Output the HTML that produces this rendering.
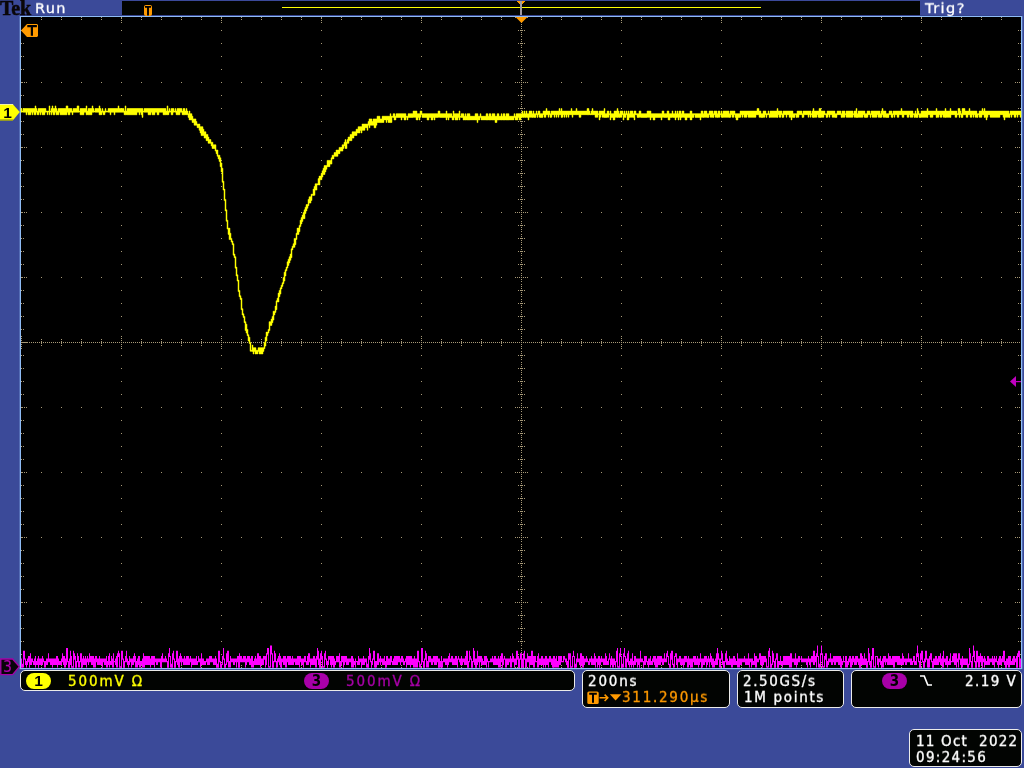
<!DOCTYPE html>
<html lang="en">
<head>
<meta charset="utf-8">
<title>Tek Run - Trig?</title>
<style>
  html, body { margin: 0; padding: 0; }
  body { width: 1024px; height: 768px; overflow: hidden; background: #3b4a99;
         font-family: "DejaVu Sans", "Liberation Sans", sans-serif; font-size: 15px; color: #fff; position: relative; }
  .abs { position: absolute; }
  .lbl, .pill, .tek, .dig { will-change: transform; }
  #scope { position: absolute; left: 0; top: 0; width: 1024px; height: 768px; }
  .tek { left: -0.5px; top: -3px; font-family: "Liberation Serif", "DejaVu Serif", serif;
          font-weight: bold; font-size: 20px; letter-spacing: -0.2px; color: #0a0608; line-height: 22px;
          -webkit-text-stroke: 0.5px #0a0608; transform: scaleX(1.0); transform-origin: 0 0; }
  .lbl { font-family: "DejaVu Sans Condensed", "DejaVu Sans", "Liberation Sans", sans-serif; line-height: 18px; white-space: pre; letter-spacing: 1.6px; -webkit-text-stroke: 0.35px currentColor; transform: scaleY(0.93); transform-origin: 0 14.2px; }
  .top { font-family: "DejaVu Sans", "Liberation Sans", sans-serif; font-size: 14.5px; -webkit-text-stroke: 0.3px currentColor; transform: scaleY(0.97); }
  .box { position: absolute; box-sizing: border-box; background: #020402; border: 1px solid #ececea;
          border-radius: 5px; }
  .pill { position: absolute; width: 25px; height: 16px; border-radius: 8px; color: #000;
           font-family: "DejaVu Sans Condensed", "DejaVu Sans", sans-serif; font-weight: bold;
           font-size: 15px; line-height: 16px; text-align: center; }
  .pill.one { font-family: "Liberation Sans", "DejaVu Sans", sans-serif; font-size: 15.5px; }
  .yel { color: #ffff00; }
  .dmag { color: #a800a8; }
  .org { color: #ff9a00; }
</style>
</head>
<body>
<svg id="scope" width="1024" height="768" viewBox="0 0 1024 768" shape-rendering="crispEdges">
  <!-- top record-view bar -->
  <rect x="122" y="1" width="798" height="15" fill="#020402"/>
  <rect x="282" y="6.5" width="479" height="1.6" fill="#ffff00"/>
  <rect x="520" y="1" width="2" height="15" fill="#a09aa2"/>
  <polygon points="517,1 525,1 523,4 522,4 522,1 520,1 520,4 519,4" fill="#ff9a00"/>
  <!-- graticule -->
  <rect x="19.7" y="16" width="1002.6" height="653.1" fill="#8fbcf5" shape-rendering="geometricPrecision"/>
  <rect x="21" y="17" width="1000" height="651" fill="#000"/>
  <rect x="20" y="15" width="1002" height="1" fill="#34428c"/>
  <path d="M21 30h1v1h-1zM21 43h1v1h-1zM21 56h1v1h-1zM21 69h1v1h-1zM21 82h1v1h-1zM21 95h1v1h-1zM21 108h1v1h-1zM21 121h1v1h-1zM21 134h1v1h-1zM21 147h1v1h-1zM21 160h1v1h-1zM21 173h1v1h-1zM21 186h1v1h-1zM21 199h1v1h-1zM21 212h1v1h-1zM21 225h1v1h-1zM21 238h1v1h-1zM21 251h1v1h-1zM21 264h1v1h-1zM21 277h1v1h-1zM21 290h1v1h-1zM21 303h1v1h-1zM21 316h1v1h-1zM21 329h1v1h-1zM21 336h1v1h-1zM21 338h1v1h-1zM21 340h1v1h-1zM21 342h1v1h-1zM21 344h1v1h-1zM21 346h1v1h-1zM21 348h1v1h-1zM21 355h1v1h-1zM21 368h1v1h-1zM21 381h1v1h-1zM21 394h1v1h-1zM21 407h1v1h-1zM21 420h1v1h-1zM21 433h1v1h-1zM21 446h1v1h-1zM21 459h1v1h-1zM21 472h1v1h-1zM21 485h1v1h-1zM21 498h1v1h-1zM21 511h1v1h-1zM21 524h1v1h-1zM21 537h1v1h-1zM21 550h1v1h-1zM21 563h1v1h-1zM21 576h1v1h-1zM21 589h1v1h-1zM21 602h1v1h-1zM21 615h1v1h-1zM21 628h1v1h-1zM21 641h1v1h-1zM21 654h1v1h-1zM22 82h1v1h-1zM22 147h1v1h-1zM22 212h1v1h-1zM22 277h1v1h-1zM22 342h1v1h-1zM22 407h1v1h-1zM22 472h1v1h-1zM22 537h1v1h-1zM22 602h1v1h-1zM23 30h1v1h-1zM23 43h1v1h-1zM23 56h1v1h-1zM23 69h1v1h-1zM23 95h1v1h-1zM23 108h1v1h-1zM23 121h1v1h-1zM23 134h1v1h-1zM23 160h1v1h-1zM23 173h1v1h-1zM23 186h1v1h-1zM23 199h1v1h-1zM23 225h1v1h-1zM23 238h1v1h-1zM23 251h1v1h-1zM23 264h1v1h-1zM23 290h1v1h-1zM23 303h1v1h-1zM23 316h1v1h-1zM23 329h1v1h-1zM23 342h1v1h-1zM23 355h1v1h-1zM23 368h1v1h-1zM23 381h1v1h-1zM23 394h1v1h-1zM23 420h1v1h-1zM23 433h1v1h-1zM23 446h1v1h-1zM23 459h1v1h-1zM23 485h1v1h-1zM23 498h1v1h-1zM23 511h1v1h-1zM23 524h1v1h-1zM23 550h1v1h-1zM23 563h1v1h-1zM23 576h1v1h-1zM23 589h1v1h-1zM23 615h1v1h-1zM23 628h1v1h-1zM23 641h1v1h-1zM23 654h1v1h-1zM24 82h1v1h-1zM24 147h1v1h-1zM24 212h1v1h-1zM24 277h1v1h-1zM24 342h1v1h-1zM24 407h1v1h-1zM24 472h1v1h-1zM24 537h1v1h-1zM24 602h1v1h-1zM25 342h1v1h-1zM26 82h1v1h-1zM26 147h1v1h-1zM26 212h1v1h-1zM26 277h1v1h-1zM26 342h1v1h-1zM26 407h1v1h-1zM26 472h1v1h-1zM26 537h1v1h-1zM26 602h1v1h-1zM27 342h1v1h-1zM29 342h1v1h-1zM31 342h1v1h-1zM33 342h1v1h-1zM35 342h1v1h-1zM37 342h1v1h-1zM39 342h1v1h-1zM41 17h1v1h-1zM41 19h1v1h-1zM41 82h1v1h-1zM41 147h1v1h-1zM41 212h1v1h-1zM41 277h1v1h-1zM41 339h1v1h-1zM41 341h1v1h-1zM41 342h1v1h-1zM41 343h1v1h-1zM41 345h1v1h-1zM41 407h1v1h-1zM41 472h1v1h-1zM41 537h1v1h-1zM41 602h1v1h-1zM41 665h1v1h-1zM41 667h1v1h-1zM43 342h1v1h-1zM45 342h1v1h-1zM47 342h1v1h-1zM49 342h1v1h-1zM51 342h1v1h-1zM53 342h1v1h-1zM55 342h1v1h-1zM57 342h1v1h-1zM59 342h1v1h-1zM61 17h1v1h-1zM61 19h1v1h-1zM61 82h1v1h-1zM61 147h1v1h-1zM61 212h1v1h-1zM61 277h1v1h-1zM61 339h1v1h-1zM61 341h1v1h-1zM61 342h1v1h-1zM61 343h1v1h-1zM61 345h1v1h-1zM61 407h1v1h-1zM61 472h1v1h-1zM61 537h1v1h-1zM61 602h1v1h-1zM61 665h1v1h-1zM61 667h1v1h-1zM63 342h1v1h-1zM65 342h1v1h-1zM67 342h1v1h-1zM69 342h1v1h-1zM71 342h1v1h-1zM73 342h1v1h-1zM75 342h1v1h-1zM77 342h1v1h-1zM79 342h1v1h-1zM81 17h1v1h-1zM81 19h1v1h-1zM81 82h1v1h-1zM81 147h1v1h-1zM81 212h1v1h-1zM81 277h1v1h-1zM81 339h1v1h-1zM81 341h1v1h-1zM81 342h1v1h-1zM81 343h1v1h-1zM81 345h1v1h-1zM81 407h1v1h-1zM81 472h1v1h-1zM81 537h1v1h-1zM81 602h1v1h-1zM81 665h1v1h-1zM81 667h1v1h-1zM83 342h1v1h-1zM85 342h1v1h-1zM87 342h1v1h-1zM89 342h1v1h-1zM91 342h1v1h-1zM93 342h1v1h-1zM95 342h1v1h-1zM97 342h1v1h-1zM99 342h1v1h-1zM101 17h1v1h-1zM101 19h1v1h-1zM101 82h1v1h-1zM101 147h1v1h-1zM101 212h1v1h-1zM101 277h1v1h-1zM101 339h1v1h-1zM101 341h1v1h-1zM101 342h1v1h-1zM101 343h1v1h-1zM101 345h1v1h-1zM101 407h1v1h-1zM101 472h1v1h-1zM101 537h1v1h-1zM101 602h1v1h-1zM101 665h1v1h-1zM101 667h1v1h-1zM103 342h1v1h-1zM105 342h1v1h-1zM107 342h1v1h-1zM109 342h1v1h-1zM111 342h1v1h-1zM113 342h1v1h-1zM115 342h1v1h-1zM117 342h1v1h-1zM119 342h1v1h-1zM121 17h1v1h-1zM121 18h1v1h-1zM121 20h1v1h-1zM121 22h1v1h-1zM121 30h1v1h-1zM121 43h1v1h-1zM121 56h1v1h-1zM121 69h1v1h-1zM121 82h1v1h-1zM121 95h1v1h-1zM121 108h1v1h-1zM121 121h1v1h-1zM121 134h1v1h-1zM121 147h1v1h-1zM121 160h1v1h-1zM121 173h1v1h-1zM121 186h1v1h-1zM121 199h1v1h-1zM121 212h1v1h-1zM121 225h1v1h-1zM121 238h1v1h-1zM121 251h1v1h-1zM121 264h1v1h-1zM121 277h1v1h-1zM121 290h1v1h-1zM121 303h1v1h-1zM121 316h1v1h-1zM121 329h1v1h-1zM121 336h1v1h-1zM121 338h1v1h-1zM121 340h1v1h-1zM121 342h1v1h-1zM121 344h1v1h-1zM121 346h1v1h-1zM121 348h1v1h-1zM121 355h1v1h-1zM121 368h1v1h-1zM121 381h1v1h-1zM121 394h1v1h-1zM121 407h1v1h-1zM121 420h1v1h-1zM121 433h1v1h-1zM121 446h1v1h-1zM121 459h1v1h-1zM121 472h1v1h-1zM121 485h1v1h-1zM121 498h1v1h-1zM121 511h1v1h-1zM121 524h1v1h-1zM121 537h1v1h-1zM121 550h1v1h-1zM121 563h1v1h-1zM121 576h1v1h-1zM121 589h1v1h-1zM121 602h1v1h-1zM121 615h1v1h-1zM121 628h1v1h-1zM121 641h1v1h-1zM121 654h1v1h-1zM121 662h1v1h-1zM121 664h1v1h-1zM121 666h1v1h-1zM121 667h1v1h-1zM123 342h1v1h-1zM125 342h1v1h-1zM127 342h1v1h-1zM129 342h1v1h-1zM131 342h1v1h-1zM133 342h1v1h-1zM135 342h1v1h-1zM137 342h1v1h-1zM139 342h1v1h-1zM141 17h1v1h-1zM141 19h1v1h-1zM141 82h1v1h-1zM141 147h1v1h-1zM141 212h1v1h-1zM141 277h1v1h-1zM141 339h1v1h-1zM141 341h1v1h-1zM141 342h1v1h-1zM141 343h1v1h-1zM141 345h1v1h-1zM141 407h1v1h-1zM141 472h1v1h-1zM141 537h1v1h-1zM141 602h1v1h-1zM141 665h1v1h-1zM141 667h1v1h-1zM143 342h1v1h-1zM145 342h1v1h-1zM147 342h1v1h-1zM149 342h1v1h-1zM151 342h1v1h-1zM153 342h1v1h-1zM155 342h1v1h-1zM157 342h1v1h-1zM159 342h1v1h-1zM161 17h1v1h-1zM161 19h1v1h-1zM161 82h1v1h-1zM161 147h1v1h-1zM161 212h1v1h-1zM161 277h1v1h-1zM161 339h1v1h-1zM161 341h1v1h-1zM161 342h1v1h-1zM161 343h1v1h-1zM161 345h1v1h-1zM161 407h1v1h-1zM161 472h1v1h-1zM161 537h1v1h-1zM161 602h1v1h-1zM161 665h1v1h-1zM161 667h1v1h-1zM163 342h1v1h-1zM165 342h1v1h-1zM167 342h1v1h-1zM169 342h1v1h-1zM171 342h1v1h-1zM173 342h1v1h-1zM175 342h1v1h-1zM177 342h1v1h-1zM179 342h1v1h-1zM181 17h1v1h-1zM181 19h1v1h-1zM181 82h1v1h-1zM181 147h1v1h-1zM181 212h1v1h-1zM181 277h1v1h-1zM181 339h1v1h-1zM181 341h1v1h-1zM181 342h1v1h-1zM181 343h1v1h-1zM181 345h1v1h-1zM181 407h1v1h-1zM181 472h1v1h-1zM181 537h1v1h-1zM181 602h1v1h-1zM181 665h1v1h-1zM181 667h1v1h-1zM183 342h1v1h-1zM185 342h1v1h-1zM187 342h1v1h-1zM189 342h1v1h-1zM191 342h1v1h-1zM193 342h1v1h-1zM195 342h1v1h-1zM197 342h1v1h-1zM199 342h1v1h-1zM201 17h1v1h-1zM201 19h1v1h-1zM201 82h1v1h-1zM201 147h1v1h-1zM201 212h1v1h-1zM201 277h1v1h-1zM201 339h1v1h-1zM201 341h1v1h-1zM201 342h1v1h-1zM201 343h1v1h-1zM201 345h1v1h-1zM201 407h1v1h-1zM201 472h1v1h-1zM201 537h1v1h-1zM201 602h1v1h-1zM201 665h1v1h-1zM201 667h1v1h-1zM203 342h1v1h-1zM205 342h1v1h-1zM207 342h1v1h-1zM209 342h1v1h-1zM211 342h1v1h-1zM213 342h1v1h-1zM215 342h1v1h-1zM217 342h1v1h-1zM219 342h1v1h-1zM221 17h1v1h-1zM221 18h1v1h-1zM221 20h1v1h-1zM221 22h1v1h-1zM221 30h1v1h-1zM221 43h1v1h-1zM221 56h1v1h-1zM221 69h1v1h-1zM221 82h1v1h-1zM221 95h1v1h-1zM221 108h1v1h-1zM221 121h1v1h-1zM221 134h1v1h-1zM221 147h1v1h-1zM221 160h1v1h-1zM221 173h1v1h-1zM221 186h1v1h-1zM221 199h1v1h-1zM221 212h1v1h-1zM221 225h1v1h-1zM221 238h1v1h-1zM221 251h1v1h-1zM221 264h1v1h-1zM221 277h1v1h-1zM221 290h1v1h-1zM221 303h1v1h-1zM221 316h1v1h-1zM221 329h1v1h-1zM221 336h1v1h-1zM221 338h1v1h-1zM221 340h1v1h-1zM221 342h1v1h-1zM221 344h1v1h-1zM221 346h1v1h-1zM221 348h1v1h-1zM221 355h1v1h-1zM221 368h1v1h-1zM221 381h1v1h-1zM221 394h1v1h-1zM221 407h1v1h-1zM221 420h1v1h-1zM221 433h1v1h-1zM221 446h1v1h-1zM221 459h1v1h-1zM221 472h1v1h-1zM221 485h1v1h-1zM221 498h1v1h-1zM221 511h1v1h-1zM221 524h1v1h-1zM221 537h1v1h-1zM221 550h1v1h-1zM221 563h1v1h-1zM221 576h1v1h-1zM221 589h1v1h-1zM221 602h1v1h-1zM221 615h1v1h-1zM221 628h1v1h-1zM221 641h1v1h-1zM221 654h1v1h-1zM221 662h1v1h-1zM221 664h1v1h-1zM221 666h1v1h-1zM221 667h1v1h-1zM223 342h1v1h-1zM225 342h1v1h-1zM227 342h1v1h-1zM229 342h1v1h-1zM231 342h1v1h-1zM233 342h1v1h-1zM235 342h1v1h-1zM237 342h1v1h-1zM239 342h1v1h-1zM241 17h1v1h-1zM241 19h1v1h-1zM241 82h1v1h-1zM241 147h1v1h-1zM241 212h1v1h-1zM241 277h1v1h-1zM241 339h1v1h-1zM241 341h1v1h-1zM241 342h1v1h-1zM241 343h1v1h-1zM241 345h1v1h-1zM241 407h1v1h-1zM241 472h1v1h-1zM241 537h1v1h-1zM241 602h1v1h-1zM241 665h1v1h-1zM241 667h1v1h-1zM243 342h1v1h-1zM245 342h1v1h-1zM247 342h1v1h-1zM249 342h1v1h-1zM251 342h1v1h-1zM253 342h1v1h-1zM255 342h1v1h-1zM257 342h1v1h-1zM259 342h1v1h-1zM261 17h1v1h-1zM261 19h1v1h-1zM261 82h1v1h-1zM261 147h1v1h-1zM261 212h1v1h-1zM261 277h1v1h-1zM261 339h1v1h-1zM261 341h1v1h-1zM261 342h1v1h-1zM261 343h1v1h-1zM261 345h1v1h-1zM261 407h1v1h-1zM261 472h1v1h-1zM261 537h1v1h-1zM261 602h1v1h-1zM261 665h1v1h-1zM261 667h1v1h-1zM263 342h1v1h-1zM265 342h1v1h-1zM267 342h1v1h-1zM269 342h1v1h-1zM271 342h1v1h-1zM273 342h1v1h-1zM275 342h1v1h-1zM277 342h1v1h-1zM279 342h1v1h-1zM281 17h1v1h-1zM281 19h1v1h-1zM281 82h1v1h-1zM281 147h1v1h-1zM281 212h1v1h-1zM281 277h1v1h-1zM281 339h1v1h-1zM281 341h1v1h-1zM281 342h1v1h-1zM281 343h1v1h-1zM281 345h1v1h-1zM281 407h1v1h-1zM281 472h1v1h-1zM281 537h1v1h-1zM281 602h1v1h-1zM281 665h1v1h-1zM281 667h1v1h-1zM283 342h1v1h-1zM285 342h1v1h-1zM287 342h1v1h-1zM289 342h1v1h-1zM291 342h1v1h-1zM293 342h1v1h-1zM295 342h1v1h-1zM297 342h1v1h-1zM299 342h1v1h-1zM301 17h1v1h-1zM301 19h1v1h-1zM301 82h1v1h-1zM301 147h1v1h-1zM301 212h1v1h-1zM301 277h1v1h-1zM301 339h1v1h-1zM301 341h1v1h-1zM301 342h1v1h-1zM301 343h1v1h-1zM301 345h1v1h-1zM301 407h1v1h-1zM301 472h1v1h-1zM301 537h1v1h-1zM301 602h1v1h-1zM301 665h1v1h-1zM301 667h1v1h-1zM303 342h1v1h-1zM305 342h1v1h-1zM307 342h1v1h-1zM309 342h1v1h-1zM311 342h1v1h-1zM313 342h1v1h-1zM315 342h1v1h-1zM317 342h1v1h-1zM319 342h1v1h-1zM321 17h1v1h-1zM321 18h1v1h-1zM321 20h1v1h-1zM321 22h1v1h-1zM321 30h1v1h-1zM321 43h1v1h-1zM321 56h1v1h-1zM321 69h1v1h-1zM321 82h1v1h-1zM321 95h1v1h-1zM321 108h1v1h-1zM321 121h1v1h-1zM321 134h1v1h-1zM321 147h1v1h-1zM321 160h1v1h-1zM321 173h1v1h-1zM321 186h1v1h-1zM321 199h1v1h-1zM321 212h1v1h-1zM321 225h1v1h-1zM321 238h1v1h-1zM321 251h1v1h-1zM321 264h1v1h-1zM321 277h1v1h-1zM321 290h1v1h-1zM321 303h1v1h-1zM321 316h1v1h-1zM321 329h1v1h-1zM321 336h1v1h-1zM321 338h1v1h-1zM321 340h1v1h-1zM321 342h1v1h-1zM321 344h1v1h-1zM321 346h1v1h-1zM321 348h1v1h-1zM321 355h1v1h-1zM321 368h1v1h-1zM321 381h1v1h-1zM321 394h1v1h-1zM321 407h1v1h-1zM321 420h1v1h-1zM321 433h1v1h-1zM321 446h1v1h-1zM321 459h1v1h-1zM321 472h1v1h-1zM321 485h1v1h-1zM321 498h1v1h-1zM321 511h1v1h-1zM321 524h1v1h-1zM321 537h1v1h-1zM321 550h1v1h-1zM321 563h1v1h-1zM321 576h1v1h-1zM321 589h1v1h-1zM321 602h1v1h-1zM321 615h1v1h-1zM321 628h1v1h-1zM321 641h1v1h-1zM321 654h1v1h-1zM321 662h1v1h-1zM321 664h1v1h-1zM321 666h1v1h-1zM321 667h1v1h-1zM323 342h1v1h-1zM325 342h1v1h-1zM327 342h1v1h-1zM329 342h1v1h-1zM331 342h1v1h-1zM333 342h1v1h-1zM335 342h1v1h-1zM337 342h1v1h-1zM339 342h1v1h-1zM341 17h1v1h-1zM341 19h1v1h-1zM341 82h1v1h-1zM341 147h1v1h-1zM341 212h1v1h-1zM341 277h1v1h-1zM341 339h1v1h-1zM341 341h1v1h-1zM341 342h1v1h-1zM341 343h1v1h-1zM341 345h1v1h-1zM341 407h1v1h-1zM341 472h1v1h-1zM341 537h1v1h-1zM341 602h1v1h-1zM341 665h1v1h-1zM341 667h1v1h-1zM343 342h1v1h-1zM345 342h1v1h-1zM347 342h1v1h-1zM349 342h1v1h-1zM351 342h1v1h-1zM353 342h1v1h-1zM355 342h1v1h-1zM357 342h1v1h-1zM359 342h1v1h-1zM361 17h1v1h-1zM361 19h1v1h-1zM361 82h1v1h-1zM361 147h1v1h-1zM361 212h1v1h-1zM361 277h1v1h-1zM361 339h1v1h-1zM361 341h1v1h-1zM361 342h1v1h-1zM361 343h1v1h-1zM361 345h1v1h-1zM361 407h1v1h-1zM361 472h1v1h-1zM361 537h1v1h-1zM361 602h1v1h-1zM361 665h1v1h-1zM361 667h1v1h-1zM363 342h1v1h-1zM365 342h1v1h-1zM367 342h1v1h-1zM369 342h1v1h-1zM371 342h1v1h-1zM373 342h1v1h-1zM375 342h1v1h-1zM377 342h1v1h-1zM379 342h1v1h-1zM381 17h1v1h-1zM381 19h1v1h-1zM381 82h1v1h-1zM381 147h1v1h-1zM381 212h1v1h-1zM381 277h1v1h-1zM381 339h1v1h-1zM381 341h1v1h-1zM381 342h1v1h-1zM381 343h1v1h-1zM381 345h1v1h-1zM381 407h1v1h-1zM381 472h1v1h-1zM381 537h1v1h-1zM381 602h1v1h-1zM381 665h1v1h-1zM381 667h1v1h-1zM383 342h1v1h-1zM385 342h1v1h-1zM387 342h1v1h-1zM389 342h1v1h-1zM391 342h1v1h-1zM393 342h1v1h-1zM395 342h1v1h-1zM397 342h1v1h-1zM399 342h1v1h-1zM401 17h1v1h-1zM401 19h1v1h-1zM401 82h1v1h-1zM401 147h1v1h-1zM401 212h1v1h-1zM401 277h1v1h-1zM401 339h1v1h-1zM401 341h1v1h-1zM401 342h1v1h-1zM401 343h1v1h-1zM401 345h1v1h-1zM401 407h1v1h-1zM401 472h1v1h-1zM401 537h1v1h-1zM401 602h1v1h-1zM401 665h1v1h-1zM401 667h1v1h-1zM403 342h1v1h-1zM405 342h1v1h-1zM407 342h1v1h-1zM409 342h1v1h-1zM411 342h1v1h-1zM413 342h1v1h-1zM415 342h1v1h-1zM417 342h1v1h-1zM419 342h1v1h-1zM421 17h1v1h-1zM421 18h1v1h-1zM421 20h1v1h-1zM421 22h1v1h-1zM421 30h1v1h-1zM421 43h1v1h-1zM421 56h1v1h-1zM421 69h1v1h-1zM421 82h1v1h-1zM421 95h1v1h-1zM421 108h1v1h-1zM421 121h1v1h-1zM421 134h1v1h-1zM421 147h1v1h-1zM421 160h1v1h-1zM421 173h1v1h-1zM421 186h1v1h-1zM421 199h1v1h-1zM421 212h1v1h-1zM421 225h1v1h-1zM421 238h1v1h-1zM421 251h1v1h-1zM421 264h1v1h-1zM421 277h1v1h-1zM421 290h1v1h-1zM421 303h1v1h-1zM421 316h1v1h-1zM421 329h1v1h-1zM421 336h1v1h-1zM421 338h1v1h-1zM421 340h1v1h-1zM421 342h1v1h-1zM421 344h1v1h-1zM421 346h1v1h-1zM421 348h1v1h-1zM421 355h1v1h-1zM421 368h1v1h-1zM421 381h1v1h-1zM421 394h1v1h-1zM421 407h1v1h-1zM421 420h1v1h-1zM421 433h1v1h-1zM421 446h1v1h-1zM421 459h1v1h-1zM421 472h1v1h-1zM421 485h1v1h-1zM421 498h1v1h-1zM421 511h1v1h-1zM421 524h1v1h-1zM421 537h1v1h-1zM421 550h1v1h-1zM421 563h1v1h-1zM421 576h1v1h-1zM421 589h1v1h-1zM421 602h1v1h-1zM421 615h1v1h-1zM421 628h1v1h-1zM421 641h1v1h-1zM421 654h1v1h-1zM421 662h1v1h-1zM421 664h1v1h-1zM421 666h1v1h-1zM421 667h1v1h-1zM423 342h1v1h-1zM425 342h1v1h-1zM427 342h1v1h-1zM429 342h1v1h-1zM431 342h1v1h-1zM433 342h1v1h-1zM435 342h1v1h-1zM437 342h1v1h-1zM439 342h1v1h-1zM441 17h1v1h-1zM441 19h1v1h-1zM441 82h1v1h-1zM441 147h1v1h-1zM441 212h1v1h-1zM441 277h1v1h-1zM441 339h1v1h-1zM441 341h1v1h-1zM441 342h1v1h-1zM441 343h1v1h-1zM441 345h1v1h-1zM441 407h1v1h-1zM441 472h1v1h-1zM441 537h1v1h-1zM441 602h1v1h-1zM441 665h1v1h-1zM441 667h1v1h-1zM443 342h1v1h-1zM445 342h1v1h-1zM447 342h1v1h-1zM449 342h1v1h-1zM451 342h1v1h-1zM453 342h1v1h-1zM455 342h1v1h-1zM457 342h1v1h-1zM459 342h1v1h-1zM461 17h1v1h-1zM461 19h1v1h-1zM461 82h1v1h-1zM461 147h1v1h-1zM461 212h1v1h-1zM461 277h1v1h-1zM461 339h1v1h-1zM461 341h1v1h-1zM461 342h1v1h-1zM461 343h1v1h-1zM461 345h1v1h-1zM461 407h1v1h-1zM461 472h1v1h-1zM461 537h1v1h-1zM461 602h1v1h-1zM461 665h1v1h-1zM461 667h1v1h-1zM463 342h1v1h-1zM465 342h1v1h-1zM467 342h1v1h-1zM469 342h1v1h-1zM471 342h1v1h-1zM473 342h1v1h-1zM475 342h1v1h-1zM477 342h1v1h-1zM479 342h1v1h-1zM481 17h1v1h-1zM481 19h1v1h-1zM481 82h1v1h-1zM481 147h1v1h-1zM481 212h1v1h-1zM481 277h1v1h-1zM481 339h1v1h-1zM481 341h1v1h-1zM481 342h1v1h-1zM481 343h1v1h-1zM481 345h1v1h-1zM481 407h1v1h-1zM481 472h1v1h-1zM481 537h1v1h-1zM481 602h1v1h-1zM481 665h1v1h-1zM481 667h1v1h-1zM483 342h1v1h-1zM485 342h1v1h-1zM487 342h1v1h-1zM489 342h1v1h-1zM491 342h1v1h-1zM493 342h1v1h-1zM495 342h1v1h-1zM497 342h1v1h-1zM499 342h1v1h-1zM501 17h1v1h-1zM501 19h1v1h-1zM501 82h1v1h-1zM501 147h1v1h-1zM501 212h1v1h-1zM501 277h1v1h-1zM501 339h1v1h-1zM501 341h1v1h-1zM501 342h1v1h-1zM501 343h1v1h-1zM501 345h1v1h-1zM501 407h1v1h-1zM501 472h1v1h-1zM501 537h1v1h-1zM501 602h1v1h-1zM501 665h1v1h-1zM501 667h1v1h-1zM503 342h1v1h-1zM505 342h1v1h-1zM507 342h1v1h-1zM509 342h1v1h-1zM511 342h1v1h-1zM513 342h1v1h-1zM515 17h1v1h-1zM515 82h1v1h-1zM515 147h1v1h-1zM515 212h1v1h-1zM515 277h1v1h-1zM515 342h1v1h-1zM515 407h1v1h-1zM515 472h1v1h-1zM515 537h1v1h-1zM515 602h1v1h-1zM515 667h1v1h-1zM517 17h1v1h-1zM517 82h1v1h-1zM517 147h1v1h-1zM517 212h1v1h-1zM517 277h1v1h-1zM517 342h1v1h-1zM517 407h1v1h-1zM517 472h1v1h-1zM517 537h1v1h-1zM517 602h1v1h-1zM517 667h1v1h-1zM518 30h1v1h-1zM518 43h1v1h-1zM518 56h1v1h-1zM518 69h1v1h-1zM518 95h1v1h-1zM518 108h1v1h-1zM518 121h1v1h-1zM518 134h1v1h-1zM518 160h1v1h-1zM518 173h1v1h-1zM518 186h1v1h-1zM518 199h1v1h-1zM518 225h1v1h-1zM518 238h1v1h-1zM518 251h1v1h-1zM518 264h1v1h-1zM518 290h1v1h-1zM518 303h1v1h-1zM518 316h1v1h-1zM518 329h1v1h-1zM518 355h1v1h-1zM518 368h1v1h-1zM518 381h1v1h-1zM518 394h1v1h-1zM518 420h1v1h-1zM518 433h1v1h-1zM518 446h1v1h-1zM518 459h1v1h-1zM518 485h1v1h-1zM518 498h1v1h-1zM518 511h1v1h-1zM518 524h1v1h-1zM518 550h1v1h-1zM518 563h1v1h-1zM518 576h1v1h-1zM518 589h1v1h-1zM518 615h1v1h-1zM518 628h1v1h-1zM518 641h1v1h-1zM518 654h1v1h-1zM519 17h1v1h-1zM519 82h1v1h-1zM519 147h1v1h-1zM519 212h1v1h-1zM519 277h1v1h-1zM519 342h1v1h-1zM519 407h1v1h-1zM519 472h1v1h-1zM519 537h1v1h-1zM519 602h1v1h-1zM519 667h1v1h-1zM520 30h1v1h-1zM520 43h1v1h-1zM520 56h1v1h-1zM520 69h1v1h-1zM520 95h1v1h-1zM520 108h1v1h-1zM520 121h1v1h-1zM520 134h1v1h-1zM520 160h1v1h-1zM520 173h1v1h-1zM520 186h1v1h-1zM520 199h1v1h-1zM520 225h1v1h-1zM520 238h1v1h-1zM520 251h1v1h-1zM520 264h1v1h-1zM520 290h1v1h-1zM520 303h1v1h-1zM520 316h1v1h-1zM520 329h1v1h-1zM520 355h1v1h-1zM520 368h1v1h-1zM520 381h1v1h-1zM520 394h1v1h-1zM520 420h1v1h-1zM520 433h1v1h-1zM520 446h1v1h-1zM520 459h1v1h-1zM520 485h1v1h-1zM520 498h1v1h-1zM520 511h1v1h-1zM520 524h1v1h-1zM520 550h1v1h-1zM520 563h1v1h-1zM520 576h1v1h-1zM520 589h1v1h-1zM520 615h1v1h-1zM520 628h1v1h-1zM520 641h1v1h-1zM520 654h1v1h-1zM521 17h1v1h-1zM521 18h1v1h-1zM521 19h1v1h-1zM521 20h1v1h-1zM521 21h1v1h-1zM521 22h1v1h-1zM521 24h1v1h-1zM521 26h1v1h-1zM521 28h1v1h-1zM521 30h1v1h-1zM521 32h1v1h-1zM521 34h1v1h-1zM521 36h1v1h-1zM521 39h1v1h-1zM521 41h1v1h-1zM521 43h1v1h-1zM521 45h1v1h-1zM521 47h1v1h-1zM521 50h1v1h-1zM521 52h1v1h-1zM521 54h1v1h-1zM521 56h1v1h-1zM521 58h1v1h-1zM521 60h1v1h-1zM521 62h1v1h-1zM521 65h1v1h-1zM521 67h1v1h-1zM521 69h1v1h-1zM521 71h1v1h-1zM521 73h1v1h-1zM521 76h1v1h-1zM521 78h1v1h-1zM521 80h1v1h-1zM521 82h1v1h-1zM521 84h1v1h-1zM521 86h1v1h-1zM521 88h1v1h-1zM521 91h1v1h-1zM521 93h1v1h-1zM521 95h1v1h-1zM521 97h1v1h-1zM521 99h1v1h-1zM521 102h1v1h-1zM521 104h1v1h-1zM521 106h1v1h-1zM521 108h1v1h-1zM521 110h1v1h-1zM521 112h1v1h-1zM521 114h1v1h-1zM521 117h1v1h-1zM521 119h1v1h-1zM521 121h1v1h-1zM521 123h1v1h-1zM521 125h1v1h-1zM521 127h1v1h-1zM521 130h1v1h-1zM521 132h1v1h-1zM521 134h1v1h-1zM521 136h1v1h-1zM521 138h1v1h-1zM521 140h1v1h-1zM521 143h1v1h-1zM521 145h1v1h-1zM521 147h1v1h-1zM521 149h1v1h-1zM521 151h1v1h-1zM521 154h1v1h-1zM521 156h1v1h-1zM521 158h1v1h-1zM521 160h1v1h-1zM521 162h1v1h-1zM521 164h1v1h-1zM521 166h1v1h-1zM521 169h1v1h-1zM521 171h1v1h-1zM521 173h1v1h-1zM521 175h1v1h-1zM521 177h1v1h-1zM521 180h1v1h-1zM521 182h1v1h-1zM521 184h1v1h-1zM521 186h1v1h-1zM521 188h1v1h-1zM521 190h1v1h-1zM521 192h1v1h-1zM521 195h1v1h-1zM521 197h1v1h-1zM521 199h1v1h-1zM521 201h1v1h-1zM521 203h1v1h-1zM521 206h1v1h-1zM521 208h1v1h-1zM521 210h1v1h-1zM521 212h1v1h-1zM521 214h1v1h-1zM521 216h1v1h-1zM521 218h1v1h-1zM521 221h1v1h-1zM521 223h1v1h-1zM521 225h1v1h-1zM521 227h1v1h-1zM521 229h1v1h-1zM521 231h1v1h-1zM521 234h1v1h-1zM521 236h1v1h-1zM521 238h1v1h-1zM521 240h1v1h-1zM521 242h1v1h-1zM521 244h1v1h-1zM521 247h1v1h-1zM521 249h1v1h-1zM521 251h1v1h-1zM521 253h1v1h-1zM521 255h1v1h-1zM521 258h1v1h-1zM521 260h1v1h-1zM521 262h1v1h-1zM521 264h1v1h-1zM521 266h1v1h-1zM521 268h1v1h-1zM521 270h1v1h-1zM521 273h1v1h-1zM521 275h1v1h-1zM521 277h1v1h-1zM521 279h1v1h-1zM521 281h1v1h-1zM521 284h1v1h-1zM521 286h1v1h-1zM521 288h1v1h-1zM521 290h1v1h-1zM521 292h1v1h-1zM521 294h1v1h-1zM521 296h1v1h-1zM521 299h1v1h-1zM521 301h1v1h-1zM521 303h1v1h-1zM521 305h1v1h-1zM521 307h1v1h-1zM521 310h1v1h-1zM521 312h1v1h-1zM521 314h1v1h-1zM521 316h1v1h-1zM521 318h1v1h-1zM521 320h1v1h-1zM521 322h1v1h-1zM521 325h1v1h-1zM521 327h1v1h-1zM521 329h1v1h-1zM521 331h1v1h-1zM521 333h1v1h-1zM521 336h1v1h-1zM521 338h1v1h-1zM521 340h1v1h-1zM521 342h1v1h-1zM521 344h1v1h-1zM521 346h1v1h-1zM521 348h1v1h-1zM521 351h1v1h-1zM521 353h1v1h-1zM521 355h1v1h-1zM521 357h1v1h-1zM521 359h1v1h-1zM521 362h1v1h-1zM521 364h1v1h-1zM521 366h1v1h-1zM521 368h1v1h-1zM521 370h1v1h-1zM521 372h1v1h-1zM521 374h1v1h-1zM521 377h1v1h-1zM521 379h1v1h-1zM521 381h1v1h-1zM521 383h1v1h-1zM521 385h1v1h-1zM521 388h1v1h-1zM521 390h1v1h-1zM521 392h1v1h-1zM521 394h1v1h-1zM521 396h1v1h-1zM521 398h1v1h-1zM521 400h1v1h-1zM521 403h1v1h-1zM521 405h1v1h-1zM521 407h1v1h-1zM521 409h1v1h-1zM521 411h1v1h-1zM521 414h1v1h-1zM521 416h1v1h-1zM521 418h1v1h-1zM521 420h1v1h-1zM521 422h1v1h-1zM521 424h1v1h-1zM521 426h1v1h-1zM521 429h1v1h-1zM521 431h1v1h-1zM521 433h1v1h-1zM521 435h1v1h-1zM521 437h1v1h-1zM521 439h1v1h-1zM521 442h1v1h-1zM521 444h1v1h-1zM521 446h1v1h-1zM521 448h1v1h-1zM521 450h1v1h-1zM521 452h1v1h-1zM521 455h1v1h-1zM521 457h1v1h-1zM521 459h1v1h-1zM521 461h1v1h-1zM521 463h1v1h-1zM521 465h1v1h-1zM521 468h1v1h-1zM521 470h1v1h-1zM521 472h1v1h-1zM521 474h1v1h-1zM521 476h1v1h-1zM521 478h1v1h-1zM521 481h1v1h-1zM521 483h1v1h-1zM521 485h1v1h-1zM521 487h1v1h-1zM521 489h1v1h-1zM521 491h1v1h-1zM521 494h1v1h-1zM521 496h1v1h-1zM521 498h1v1h-1zM521 500h1v1h-1zM521 502h1v1h-1zM521 504h1v1h-1zM521 507h1v1h-1zM521 509h1v1h-1zM521 511h1v1h-1zM521 513h1v1h-1zM521 515h1v1h-1zM521 518h1v1h-1zM521 520h1v1h-1zM521 522h1v1h-1zM521 524h1v1h-1zM521 526h1v1h-1zM521 528h1v1h-1zM521 530h1v1h-1zM521 533h1v1h-1zM521 535h1v1h-1zM521 537h1v1h-1zM521 539h1v1h-1zM521 541h1v1h-1zM521 544h1v1h-1zM521 546h1v1h-1zM521 548h1v1h-1zM521 550h1v1h-1zM521 552h1v1h-1zM521 554h1v1h-1zM521 556h1v1h-1zM521 559h1v1h-1zM521 561h1v1h-1zM521 563h1v1h-1zM521 565h1v1h-1zM521 567h1v1h-1zM521 570h1v1h-1zM521 572h1v1h-1zM521 574h1v1h-1zM521 576h1v1h-1zM521 578h1v1h-1zM521 580h1v1h-1zM521 582h1v1h-1zM521 585h1v1h-1zM521 587h1v1h-1zM521 589h1v1h-1zM521 591h1v1h-1zM521 593h1v1h-1zM521 596h1v1h-1zM521 598h1v1h-1zM521 600h1v1h-1zM521 602h1v1h-1zM521 604h1v1h-1zM521 606h1v1h-1zM521 608h1v1h-1zM521 611h1v1h-1zM521 613h1v1h-1zM521 615h1v1h-1zM521 617h1v1h-1zM521 619h1v1h-1zM521 622h1v1h-1zM521 624h1v1h-1zM521 626h1v1h-1zM521 628h1v1h-1zM521 630h1v1h-1zM521 632h1v1h-1zM521 634h1v1h-1zM521 637h1v1h-1zM521 639h1v1h-1zM521 641h1v1h-1zM521 643h1v1h-1zM521 645h1v1h-1zM521 648h1v1h-1zM521 650h1v1h-1zM521 652h1v1h-1zM521 654h1v1h-1zM521 656h1v1h-1zM521 658h1v1h-1zM521 660h1v1h-1zM521 662h1v1h-1zM521 663h1v1h-1zM521 664h1v1h-1zM521 665h1v1h-1zM521 666h1v1h-1zM521 667h1v1h-1zM522 30h1v1h-1zM522 43h1v1h-1zM522 56h1v1h-1zM522 69h1v1h-1zM522 95h1v1h-1zM522 108h1v1h-1zM522 121h1v1h-1zM522 134h1v1h-1zM522 160h1v1h-1zM522 173h1v1h-1zM522 186h1v1h-1zM522 199h1v1h-1zM522 225h1v1h-1zM522 238h1v1h-1zM522 251h1v1h-1zM522 264h1v1h-1zM522 290h1v1h-1zM522 303h1v1h-1zM522 316h1v1h-1zM522 329h1v1h-1zM522 355h1v1h-1zM522 368h1v1h-1zM522 381h1v1h-1zM522 394h1v1h-1zM522 420h1v1h-1zM522 433h1v1h-1zM522 446h1v1h-1zM522 459h1v1h-1zM522 485h1v1h-1zM522 498h1v1h-1zM522 511h1v1h-1zM522 524h1v1h-1zM522 550h1v1h-1zM522 563h1v1h-1zM522 576h1v1h-1zM522 589h1v1h-1zM522 615h1v1h-1zM522 628h1v1h-1zM522 641h1v1h-1zM522 654h1v1h-1zM523 17h1v1h-1zM523 82h1v1h-1zM523 147h1v1h-1zM523 212h1v1h-1zM523 277h1v1h-1zM523 342h1v1h-1zM523 407h1v1h-1zM523 472h1v1h-1zM523 537h1v1h-1zM523 602h1v1h-1zM523 667h1v1h-1zM524 30h1v1h-1zM524 43h1v1h-1zM524 56h1v1h-1zM524 69h1v1h-1zM524 95h1v1h-1zM524 108h1v1h-1zM524 121h1v1h-1zM524 134h1v1h-1zM524 160h1v1h-1zM524 173h1v1h-1zM524 186h1v1h-1zM524 199h1v1h-1zM524 225h1v1h-1zM524 238h1v1h-1zM524 251h1v1h-1zM524 264h1v1h-1zM524 290h1v1h-1zM524 303h1v1h-1zM524 316h1v1h-1zM524 329h1v1h-1zM524 355h1v1h-1zM524 368h1v1h-1zM524 381h1v1h-1zM524 394h1v1h-1zM524 420h1v1h-1zM524 433h1v1h-1zM524 446h1v1h-1zM524 459h1v1h-1zM524 485h1v1h-1zM524 498h1v1h-1zM524 511h1v1h-1zM524 524h1v1h-1zM524 550h1v1h-1zM524 563h1v1h-1zM524 576h1v1h-1zM524 589h1v1h-1zM524 615h1v1h-1zM524 628h1v1h-1zM524 641h1v1h-1zM524 654h1v1h-1zM525 17h1v1h-1zM525 82h1v1h-1zM525 147h1v1h-1zM525 212h1v1h-1zM525 277h1v1h-1zM525 342h1v1h-1zM525 407h1v1h-1zM525 472h1v1h-1zM525 537h1v1h-1zM525 602h1v1h-1zM525 667h1v1h-1zM527 17h1v1h-1zM527 82h1v1h-1zM527 147h1v1h-1zM527 212h1v1h-1zM527 277h1v1h-1zM527 342h1v1h-1zM527 407h1v1h-1zM527 472h1v1h-1zM527 537h1v1h-1zM527 602h1v1h-1zM527 667h1v1h-1zM529 342h1v1h-1zM531 342h1v1h-1zM533 342h1v1h-1zM535 342h1v1h-1zM537 342h1v1h-1zM539 342h1v1h-1zM541 17h1v1h-1zM541 19h1v1h-1zM541 82h1v1h-1zM541 147h1v1h-1zM541 212h1v1h-1zM541 277h1v1h-1zM541 339h1v1h-1zM541 341h1v1h-1zM541 342h1v1h-1zM541 343h1v1h-1zM541 345h1v1h-1zM541 407h1v1h-1zM541 472h1v1h-1zM541 537h1v1h-1zM541 602h1v1h-1zM541 665h1v1h-1zM541 667h1v1h-1zM543 342h1v1h-1zM545 342h1v1h-1zM547 342h1v1h-1zM549 342h1v1h-1zM551 342h1v1h-1zM553 342h1v1h-1zM555 342h1v1h-1zM557 342h1v1h-1zM559 342h1v1h-1zM561 17h1v1h-1zM561 19h1v1h-1zM561 82h1v1h-1zM561 147h1v1h-1zM561 212h1v1h-1zM561 277h1v1h-1zM561 339h1v1h-1zM561 341h1v1h-1zM561 342h1v1h-1zM561 343h1v1h-1zM561 345h1v1h-1zM561 407h1v1h-1zM561 472h1v1h-1zM561 537h1v1h-1zM561 602h1v1h-1zM561 665h1v1h-1zM561 667h1v1h-1zM563 342h1v1h-1zM565 342h1v1h-1zM567 342h1v1h-1zM569 342h1v1h-1zM571 342h1v1h-1zM573 342h1v1h-1zM575 342h1v1h-1zM577 342h1v1h-1zM579 342h1v1h-1zM581 17h1v1h-1zM581 19h1v1h-1zM581 82h1v1h-1zM581 147h1v1h-1zM581 212h1v1h-1zM581 277h1v1h-1zM581 339h1v1h-1zM581 341h1v1h-1zM581 342h1v1h-1zM581 343h1v1h-1zM581 345h1v1h-1zM581 407h1v1h-1zM581 472h1v1h-1zM581 537h1v1h-1zM581 602h1v1h-1zM581 665h1v1h-1zM581 667h1v1h-1zM583 342h1v1h-1zM585 342h1v1h-1zM587 342h1v1h-1zM589 342h1v1h-1zM591 342h1v1h-1zM593 342h1v1h-1zM595 342h1v1h-1zM597 342h1v1h-1zM599 342h1v1h-1zM601 17h1v1h-1zM601 19h1v1h-1zM601 82h1v1h-1zM601 147h1v1h-1zM601 212h1v1h-1zM601 277h1v1h-1zM601 339h1v1h-1zM601 341h1v1h-1zM601 342h1v1h-1zM601 343h1v1h-1zM601 345h1v1h-1zM601 407h1v1h-1zM601 472h1v1h-1zM601 537h1v1h-1zM601 602h1v1h-1zM601 665h1v1h-1zM601 667h1v1h-1zM603 342h1v1h-1zM605 342h1v1h-1zM607 342h1v1h-1zM609 342h1v1h-1zM611 342h1v1h-1zM613 342h1v1h-1zM615 342h1v1h-1zM617 342h1v1h-1zM619 342h1v1h-1zM621 17h1v1h-1zM621 18h1v1h-1zM621 20h1v1h-1zM621 22h1v1h-1zM621 30h1v1h-1zM621 43h1v1h-1zM621 56h1v1h-1zM621 69h1v1h-1zM621 82h1v1h-1zM621 95h1v1h-1zM621 108h1v1h-1zM621 121h1v1h-1zM621 134h1v1h-1zM621 147h1v1h-1zM621 160h1v1h-1zM621 173h1v1h-1zM621 186h1v1h-1zM621 199h1v1h-1zM621 212h1v1h-1zM621 225h1v1h-1zM621 238h1v1h-1zM621 251h1v1h-1zM621 264h1v1h-1zM621 277h1v1h-1zM621 290h1v1h-1zM621 303h1v1h-1zM621 316h1v1h-1zM621 329h1v1h-1zM621 336h1v1h-1zM621 338h1v1h-1zM621 340h1v1h-1zM621 342h1v1h-1zM621 344h1v1h-1zM621 346h1v1h-1zM621 348h1v1h-1zM621 355h1v1h-1zM621 368h1v1h-1zM621 381h1v1h-1zM621 394h1v1h-1zM621 407h1v1h-1zM621 420h1v1h-1zM621 433h1v1h-1zM621 446h1v1h-1zM621 459h1v1h-1zM621 472h1v1h-1zM621 485h1v1h-1zM621 498h1v1h-1zM621 511h1v1h-1zM621 524h1v1h-1zM621 537h1v1h-1zM621 550h1v1h-1zM621 563h1v1h-1zM621 576h1v1h-1zM621 589h1v1h-1zM621 602h1v1h-1zM621 615h1v1h-1zM621 628h1v1h-1zM621 641h1v1h-1zM621 654h1v1h-1zM621 662h1v1h-1zM621 664h1v1h-1zM621 666h1v1h-1zM621 667h1v1h-1zM623 342h1v1h-1zM625 342h1v1h-1zM627 342h1v1h-1zM629 342h1v1h-1zM631 342h1v1h-1zM633 342h1v1h-1zM635 342h1v1h-1zM637 342h1v1h-1zM639 342h1v1h-1zM641 17h1v1h-1zM641 19h1v1h-1zM641 82h1v1h-1zM641 147h1v1h-1zM641 212h1v1h-1zM641 277h1v1h-1zM641 339h1v1h-1zM641 341h1v1h-1zM641 342h1v1h-1zM641 343h1v1h-1zM641 345h1v1h-1zM641 407h1v1h-1zM641 472h1v1h-1zM641 537h1v1h-1zM641 602h1v1h-1zM641 665h1v1h-1zM641 667h1v1h-1zM643 342h1v1h-1zM645 342h1v1h-1zM647 342h1v1h-1zM649 342h1v1h-1zM651 342h1v1h-1zM653 342h1v1h-1zM655 342h1v1h-1zM657 342h1v1h-1zM659 342h1v1h-1zM661 17h1v1h-1zM661 19h1v1h-1zM661 82h1v1h-1zM661 147h1v1h-1zM661 212h1v1h-1zM661 277h1v1h-1zM661 339h1v1h-1zM661 341h1v1h-1zM661 342h1v1h-1zM661 343h1v1h-1zM661 345h1v1h-1zM661 407h1v1h-1zM661 472h1v1h-1zM661 537h1v1h-1zM661 602h1v1h-1zM661 665h1v1h-1zM661 667h1v1h-1zM663 342h1v1h-1zM665 342h1v1h-1zM667 342h1v1h-1zM669 342h1v1h-1zM671 342h1v1h-1zM673 342h1v1h-1zM675 342h1v1h-1zM677 342h1v1h-1zM679 342h1v1h-1zM681 17h1v1h-1zM681 19h1v1h-1zM681 82h1v1h-1zM681 147h1v1h-1zM681 212h1v1h-1zM681 277h1v1h-1zM681 339h1v1h-1zM681 341h1v1h-1zM681 342h1v1h-1zM681 343h1v1h-1zM681 345h1v1h-1zM681 407h1v1h-1zM681 472h1v1h-1zM681 537h1v1h-1zM681 602h1v1h-1zM681 665h1v1h-1zM681 667h1v1h-1zM683 342h1v1h-1zM685 342h1v1h-1zM687 342h1v1h-1zM689 342h1v1h-1zM691 342h1v1h-1zM693 342h1v1h-1zM695 342h1v1h-1zM697 342h1v1h-1zM699 342h1v1h-1zM701 17h1v1h-1zM701 19h1v1h-1zM701 82h1v1h-1zM701 147h1v1h-1zM701 212h1v1h-1zM701 277h1v1h-1zM701 339h1v1h-1zM701 341h1v1h-1zM701 342h1v1h-1zM701 343h1v1h-1zM701 345h1v1h-1zM701 407h1v1h-1zM701 472h1v1h-1zM701 537h1v1h-1zM701 602h1v1h-1zM701 665h1v1h-1zM701 667h1v1h-1zM703 342h1v1h-1zM705 342h1v1h-1zM707 342h1v1h-1zM709 342h1v1h-1zM711 342h1v1h-1zM713 342h1v1h-1zM715 342h1v1h-1zM717 342h1v1h-1zM719 342h1v1h-1zM721 17h1v1h-1zM721 18h1v1h-1zM721 20h1v1h-1zM721 22h1v1h-1zM721 30h1v1h-1zM721 43h1v1h-1zM721 56h1v1h-1zM721 69h1v1h-1zM721 82h1v1h-1zM721 95h1v1h-1zM721 108h1v1h-1zM721 121h1v1h-1zM721 134h1v1h-1zM721 147h1v1h-1zM721 160h1v1h-1zM721 173h1v1h-1zM721 186h1v1h-1zM721 199h1v1h-1zM721 212h1v1h-1zM721 225h1v1h-1zM721 238h1v1h-1zM721 251h1v1h-1zM721 264h1v1h-1zM721 277h1v1h-1zM721 290h1v1h-1zM721 303h1v1h-1zM721 316h1v1h-1zM721 329h1v1h-1zM721 336h1v1h-1zM721 338h1v1h-1zM721 340h1v1h-1zM721 342h1v1h-1zM721 344h1v1h-1zM721 346h1v1h-1zM721 348h1v1h-1zM721 355h1v1h-1zM721 368h1v1h-1zM721 381h1v1h-1zM721 394h1v1h-1zM721 407h1v1h-1zM721 420h1v1h-1zM721 433h1v1h-1zM721 446h1v1h-1zM721 459h1v1h-1zM721 472h1v1h-1zM721 485h1v1h-1zM721 498h1v1h-1zM721 511h1v1h-1zM721 524h1v1h-1zM721 537h1v1h-1zM721 550h1v1h-1zM721 563h1v1h-1zM721 576h1v1h-1zM721 589h1v1h-1zM721 602h1v1h-1zM721 615h1v1h-1zM721 628h1v1h-1zM721 641h1v1h-1zM721 654h1v1h-1zM721 662h1v1h-1zM721 664h1v1h-1zM721 666h1v1h-1zM721 667h1v1h-1zM723 342h1v1h-1zM725 342h1v1h-1zM727 342h1v1h-1zM729 342h1v1h-1zM731 342h1v1h-1zM733 342h1v1h-1zM735 342h1v1h-1zM737 342h1v1h-1zM739 342h1v1h-1zM741 17h1v1h-1zM741 19h1v1h-1zM741 82h1v1h-1zM741 147h1v1h-1zM741 212h1v1h-1zM741 277h1v1h-1zM741 339h1v1h-1zM741 341h1v1h-1zM741 342h1v1h-1zM741 343h1v1h-1zM741 345h1v1h-1zM741 407h1v1h-1zM741 472h1v1h-1zM741 537h1v1h-1zM741 602h1v1h-1zM741 665h1v1h-1zM741 667h1v1h-1zM743 342h1v1h-1zM745 342h1v1h-1zM747 342h1v1h-1zM749 342h1v1h-1zM751 342h1v1h-1zM753 342h1v1h-1zM755 342h1v1h-1zM757 342h1v1h-1zM759 342h1v1h-1zM761 17h1v1h-1zM761 19h1v1h-1zM761 82h1v1h-1zM761 147h1v1h-1zM761 212h1v1h-1zM761 277h1v1h-1zM761 339h1v1h-1zM761 341h1v1h-1zM761 342h1v1h-1zM761 343h1v1h-1zM761 345h1v1h-1zM761 407h1v1h-1zM761 472h1v1h-1zM761 537h1v1h-1zM761 602h1v1h-1zM761 665h1v1h-1zM761 667h1v1h-1zM763 342h1v1h-1zM765 342h1v1h-1zM767 342h1v1h-1zM769 342h1v1h-1zM771 342h1v1h-1zM773 342h1v1h-1zM775 342h1v1h-1zM777 342h1v1h-1zM779 342h1v1h-1zM781 17h1v1h-1zM781 19h1v1h-1zM781 82h1v1h-1zM781 147h1v1h-1zM781 212h1v1h-1zM781 277h1v1h-1zM781 339h1v1h-1zM781 341h1v1h-1zM781 342h1v1h-1zM781 343h1v1h-1zM781 345h1v1h-1zM781 407h1v1h-1zM781 472h1v1h-1zM781 537h1v1h-1zM781 602h1v1h-1zM781 665h1v1h-1zM781 667h1v1h-1zM783 342h1v1h-1zM785 342h1v1h-1zM787 342h1v1h-1zM789 342h1v1h-1zM791 342h1v1h-1zM793 342h1v1h-1zM795 342h1v1h-1zM797 342h1v1h-1zM799 342h1v1h-1zM801 17h1v1h-1zM801 19h1v1h-1zM801 82h1v1h-1zM801 147h1v1h-1zM801 212h1v1h-1zM801 277h1v1h-1zM801 339h1v1h-1zM801 341h1v1h-1zM801 342h1v1h-1zM801 343h1v1h-1zM801 345h1v1h-1zM801 407h1v1h-1zM801 472h1v1h-1zM801 537h1v1h-1zM801 602h1v1h-1zM801 665h1v1h-1zM801 667h1v1h-1zM803 342h1v1h-1zM805 342h1v1h-1zM807 342h1v1h-1zM809 342h1v1h-1zM811 342h1v1h-1zM813 342h1v1h-1zM815 342h1v1h-1zM817 342h1v1h-1zM819 342h1v1h-1zM821 17h1v1h-1zM821 18h1v1h-1zM821 20h1v1h-1zM821 22h1v1h-1zM821 30h1v1h-1zM821 43h1v1h-1zM821 56h1v1h-1zM821 69h1v1h-1zM821 82h1v1h-1zM821 95h1v1h-1zM821 108h1v1h-1zM821 121h1v1h-1zM821 134h1v1h-1zM821 147h1v1h-1zM821 160h1v1h-1zM821 173h1v1h-1zM821 186h1v1h-1zM821 199h1v1h-1zM821 212h1v1h-1zM821 225h1v1h-1zM821 238h1v1h-1zM821 251h1v1h-1zM821 264h1v1h-1zM821 277h1v1h-1zM821 290h1v1h-1zM821 303h1v1h-1zM821 316h1v1h-1zM821 329h1v1h-1zM821 336h1v1h-1zM821 338h1v1h-1zM821 340h1v1h-1zM821 342h1v1h-1zM821 344h1v1h-1zM821 346h1v1h-1zM821 348h1v1h-1zM821 355h1v1h-1zM821 368h1v1h-1zM821 381h1v1h-1zM821 394h1v1h-1zM821 407h1v1h-1zM821 420h1v1h-1zM821 433h1v1h-1zM821 446h1v1h-1zM821 459h1v1h-1zM821 472h1v1h-1zM821 485h1v1h-1zM821 498h1v1h-1zM821 511h1v1h-1zM821 524h1v1h-1zM821 537h1v1h-1zM821 550h1v1h-1zM821 563h1v1h-1zM821 576h1v1h-1zM821 589h1v1h-1zM821 602h1v1h-1zM821 615h1v1h-1zM821 628h1v1h-1zM821 641h1v1h-1zM821 654h1v1h-1zM821 662h1v1h-1zM821 664h1v1h-1zM821 666h1v1h-1zM821 667h1v1h-1zM823 342h1v1h-1zM825 342h1v1h-1zM827 342h1v1h-1zM829 342h1v1h-1zM831 342h1v1h-1zM833 342h1v1h-1zM835 342h1v1h-1zM837 342h1v1h-1zM839 342h1v1h-1zM841 17h1v1h-1zM841 19h1v1h-1zM841 82h1v1h-1zM841 147h1v1h-1zM841 212h1v1h-1zM841 277h1v1h-1zM841 339h1v1h-1zM841 341h1v1h-1zM841 342h1v1h-1zM841 343h1v1h-1zM841 345h1v1h-1zM841 407h1v1h-1zM841 472h1v1h-1zM841 537h1v1h-1zM841 602h1v1h-1zM841 665h1v1h-1zM841 667h1v1h-1zM843 342h1v1h-1zM845 342h1v1h-1zM847 342h1v1h-1zM849 342h1v1h-1zM851 342h1v1h-1zM853 342h1v1h-1zM855 342h1v1h-1zM857 342h1v1h-1zM859 342h1v1h-1zM861 17h1v1h-1zM861 19h1v1h-1zM861 82h1v1h-1zM861 147h1v1h-1zM861 212h1v1h-1zM861 277h1v1h-1zM861 339h1v1h-1zM861 341h1v1h-1zM861 342h1v1h-1zM861 343h1v1h-1zM861 345h1v1h-1zM861 407h1v1h-1zM861 472h1v1h-1zM861 537h1v1h-1zM861 602h1v1h-1zM861 665h1v1h-1zM861 667h1v1h-1zM863 342h1v1h-1zM865 342h1v1h-1zM867 342h1v1h-1zM869 342h1v1h-1zM871 342h1v1h-1zM873 342h1v1h-1zM875 342h1v1h-1zM877 342h1v1h-1zM879 342h1v1h-1zM881 17h1v1h-1zM881 19h1v1h-1zM881 82h1v1h-1zM881 147h1v1h-1zM881 212h1v1h-1zM881 277h1v1h-1zM881 339h1v1h-1zM881 341h1v1h-1zM881 342h1v1h-1zM881 343h1v1h-1zM881 345h1v1h-1zM881 407h1v1h-1zM881 472h1v1h-1zM881 537h1v1h-1zM881 602h1v1h-1zM881 665h1v1h-1zM881 667h1v1h-1zM883 342h1v1h-1zM885 342h1v1h-1zM887 342h1v1h-1zM889 342h1v1h-1zM891 342h1v1h-1zM893 342h1v1h-1zM895 342h1v1h-1zM897 342h1v1h-1zM899 342h1v1h-1zM901 17h1v1h-1zM901 19h1v1h-1zM901 82h1v1h-1zM901 147h1v1h-1zM901 212h1v1h-1zM901 277h1v1h-1zM901 339h1v1h-1zM901 341h1v1h-1zM901 342h1v1h-1zM901 343h1v1h-1zM901 345h1v1h-1zM901 407h1v1h-1zM901 472h1v1h-1zM901 537h1v1h-1zM901 602h1v1h-1zM901 665h1v1h-1zM901 667h1v1h-1zM903 342h1v1h-1zM905 342h1v1h-1zM907 342h1v1h-1zM909 342h1v1h-1zM911 342h1v1h-1zM913 342h1v1h-1zM915 342h1v1h-1zM917 342h1v1h-1zM919 342h1v1h-1zM921 17h1v1h-1zM921 18h1v1h-1zM921 20h1v1h-1zM921 22h1v1h-1zM921 30h1v1h-1zM921 43h1v1h-1zM921 56h1v1h-1zM921 69h1v1h-1zM921 82h1v1h-1zM921 95h1v1h-1zM921 108h1v1h-1zM921 121h1v1h-1zM921 134h1v1h-1zM921 147h1v1h-1zM921 160h1v1h-1zM921 173h1v1h-1zM921 186h1v1h-1zM921 199h1v1h-1zM921 212h1v1h-1zM921 225h1v1h-1zM921 238h1v1h-1zM921 251h1v1h-1zM921 264h1v1h-1zM921 277h1v1h-1zM921 290h1v1h-1zM921 303h1v1h-1zM921 316h1v1h-1zM921 329h1v1h-1zM921 336h1v1h-1zM921 338h1v1h-1zM921 340h1v1h-1zM921 342h1v1h-1zM921 344h1v1h-1zM921 346h1v1h-1zM921 348h1v1h-1zM921 355h1v1h-1zM921 368h1v1h-1zM921 381h1v1h-1zM921 394h1v1h-1zM921 407h1v1h-1zM921 420h1v1h-1zM921 433h1v1h-1zM921 446h1v1h-1zM921 459h1v1h-1zM921 472h1v1h-1zM921 485h1v1h-1zM921 498h1v1h-1zM921 511h1v1h-1zM921 524h1v1h-1zM921 537h1v1h-1zM921 550h1v1h-1zM921 563h1v1h-1zM921 576h1v1h-1zM921 589h1v1h-1zM921 602h1v1h-1zM921 615h1v1h-1zM921 628h1v1h-1zM921 641h1v1h-1zM921 654h1v1h-1zM921 662h1v1h-1zM921 664h1v1h-1zM921 666h1v1h-1zM921 667h1v1h-1zM923 342h1v1h-1zM925 342h1v1h-1zM927 342h1v1h-1zM929 342h1v1h-1zM931 342h1v1h-1zM933 342h1v1h-1zM935 342h1v1h-1zM937 342h1v1h-1zM939 342h1v1h-1zM941 17h1v1h-1zM941 19h1v1h-1zM941 82h1v1h-1zM941 147h1v1h-1zM941 212h1v1h-1zM941 277h1v1h-1zM941 339h1v1h-1zM941 341h1v1h-1zM941 342h1v1h-1zM941 343h1v1h-1zM941 345h1v1h-1zM941 407h1v1h-1zM941 472h1v1h-1zM941 537h1v1h-1zM941 602h1v1h-1zM941 665h1v1h-1zM941 667h1v1h-1zM943 342h1v1h-1zM945 342h1v1h-1zM947 342h1v1h-1zM949 342h1v1h-1zM951 342h1v1h-1zM953 342h1v1h-1zM955 342h1v1h-1zM957 342h1v1h-1zM959 342h1v1h-1zM961 17h1v1h-1zM961 19h1v1h-1zM961 82h1v1h-1zM961 147h1v1h-1zM961 212h1v1h-1zM961 277h1v1h-1zM961 339h1v1h-1zM961 341h1v1h-1zM961 342h1v1h-1zM961 343h1v1h-1zM961 345h1v1h-1zM961 407h1v1h-1zM961 472h1v1h-1zM961 537h1v1h-1zM961 602h1v1h-1zM961 665h1v1h-1zM961 667h1v1h-1zM963 342h1v1h-1zM965 342h1v1h-1zM967 342h1v1h-1zM969 342h1v1h-1zM971 342h1v1h-1zM973 342h1v1h-1zM975 342h1v1h-1zM977 342h1v1h-1zM979 342h1v1h-1zM981 17h1v1h-1zM981 19h1v1h-1zM981 82h1v1h-1zM981 147h1v1h-1zM981 212h1v1h-1zM981 277h1v1h-1zM981 339h1v1h-1zM981 341h1v1h-1zM981 342h1v1h-1zM981 343h1v1h-1zM981 345h1v1h-1zM981 407h1v1h-1zM981 472h1v1h-1zM981 537h1v1h-1zM981 602h1v1h-1zM981 665h1v1h-1zM981 667h1v1h-1zM983 342h1v1h-1zM985 342h1v1h-1zM987 342h1v1h-1zM989 342h1v1h-1zM991 342h1v1h-1zM993 342h1v1h-1zM995 342h1v1h-1zM997 342h1v1h-1zM999 342h1v1h-1zM1001 17h1v1h-1zM1001 19h1v1h-1zM1001 82h1v1h-1zM1001 147h1v1h-1zM1001 212h1v1h-1zM1001 277h1v1h-1zM1001 339h1v1h-1zM1001 341h1v1h-1zM1001 342h1v1h-1zM1001 343h1v1h-1zM1001 345h1v1h-1zM1001 407h1v1h-1zM1001 472h1v1h-1zM1001 537h1v1h-1zM1001 602h1v1h-1zM1001 665h1v1h-1zM1001 667h1v1h-1zM1003 342h1v1h-1zM1005 342h1v1h-1zM1007 342h1v1h-1zM1009 342h1v1h-1zM1011 342h1v1h-1zM1013 342h1v1h-1zM1015 82h1v1h-1zM1015 147h1v1h-1zM1015 212h1v1h-1zM1015 277h1v1h-1zM1015 342h1v1h-1zM1015 407h1v1h-1zM1015 472h1v1h-1zM1015 537h1v1h-1zM1015 602h1v1h-1zM1017 82h1v1h-1zM1017 147h1v1h-1zM1017 212h1v1h-1zM1017 277h1v1h-1zM1017 342h1v1h-1zM1017 407h1v1h-1zM1017 472h1v1h-1zM1017 537h1v1h-1zM1017 602h1v1h-1zM1018 30h1v1h-1zM1018 43h1v1h-1zM1018 56h1v1h-1zM1018 69h1v1h-1zM1018 95h1v1h-1zM1018 108h1v1h-1zM1018 121h1v1h-1zM1018 134h1v1h-1zM1018 160h1v1h-1zM1018 173h1v1h-1zM1018 186h1v1h-1zM1018 199h1v1h-1zM1018 225h1v1h-1zM1018 238h1v1h-1zM1018 251h1v1h-1zM1018 264h1v1h-1zM1018 290h1v1h-1zM1018 303h1v1h-1zM1018 316h1v1h-1zM1018 329h1v1h-1zM1018 355h1v1h-1zM1018 368h1v1h-1zM1018 381h1v1h-1zM1018 394h1v1h-1zM1018 420h1v1h-1zM1018 433h1v1h-1zM1018 446h1v1h-1zM1018 459h1v1h-1zM1018 485h1v1h-1zM1018 498h1v1h-1zM1018 511h1v1h-1zM1018 524h1v1h-1zM1018 550h1v1h-1zM1018 563h1v1h-1zM1018 576h1v1h-1zM1018 589h1v1h-1zM1018 615h1v1h-1zM1018 628h1v1h-1zM1018 641h1v1h-1zM1018 654h1v1h-1zM1019 82h1v1h-1zM1019 147h1v1h-1zM1019 212h1v1h-1zM1019 277h1v1h-1zM1019 342h1v1h-1zM1019 407h1v1h-1zM1019 472h1v1h-1zM1019 537h1v1h-1zM1019 602h1v1h-1zM1020 30h1v1h-1zM1020 43h1v1h-1zM1020 56h1v1h-1zM1020 69h1v1h-1zM1020 95h1v1h-1zM1020 108h1v1h-1zM1020 121h1v1h-1zM1020 134h1v1h-1zM1020 160h1v1h-1zM1020 173h1v1h-1zM1020 186h1v1h-1zM1020 199h1v1h-1zM1020 225h1v1h-1zM1020 238h1v1h-1zM1020 251h1v1h-1zM1020 264h1v1h-1zM1020 290h1v1h-1zM1020 303h1v1h-1zM1020 316h1v1h-1zM1020 329h1v1h-1zM1020 355h1v1h-1zM1020 368h1v1h-1zM1020 381h1v1h-1zM1020 394h1v1h-1zM1020 420h1v1h-1zM1020 433h1v1h-1zM1020 446h1v1h-1zM1020 459h1v1h-1zM1020 485h1v1h-1zM1020 498h1v1h-1zM1020 511h1v1h-1zM1020 524h1v1h-1zM1020 550h1v1h-1zM1020 563h1v1h-1zM1020 576h1v1h-1zM1020 589h1v1h-1zM1020 615h1v1h-1zM1020 628h1v1h-1zM1020 641h1v1h-1zM1020 654h1v1h-1z" fill="#a89a78"/>
  <!-- trigger position marker -->
  <polygon points="515.5,17 527.5,17 521.5,23" fill="#ff9a00" shape-rendering="geometricPrecision"/>
  <!-- waveforms -->
  <path id="ch3" d="M21 658.5h1v9.3h-1zM22 663.7h1v4.1h-1zM23 650.7h1v16.8h-1zM24 650.7h1v9.0h-1zM25 658.5h1v6.4h-1zM26 661.1h1v6.4h-1zM27 658.5h1v6.4h-1zM28 655.9h1v6.4h-1zM29 655.9h1v11.9h-1zM30 653.3h1v11.6h-1zM31 658.5h1v6.4h-1zM32 658.5h1v3.8h-1zM33 661.1h1v3.8h-1zM34 658.5h1v6.4h-1zM35 655.9h1v11.6h-1zM36 661.1h1v3.8h-1zM37 658.5h1v6.4h-1zM38 655.9h1v11.9h-1zM39 658.5h1v6.4h-1zM40 658.5h1v6.4h-1zM41 658.5h1v6.4h-1zM42 655.9h1v9.0h-1zM43 658.5h1v3.8h-1zM44 661.1h1v6.4h-1zM45 661.1h1v6.4h-1zM46 658.5h1v6.4h-1zM47 658.5h1v6.4h-1zM48 653.3h1v9.0h-1zM49 658.5h1v3.8h-1zM50 658.5h1v6.4h-1zM51 658.5h1v6.4h-1zM52 658.5h1v9.0h-1zM53 658.5h1v6.4h-1zM54 658.5h1v6.4h-1zM55 658.5h1v6.4h-1zM56 655.9h1v9.0h-1zM57 655.9h1v11.6h-1zM58 658.5h1v6.4h-1zM59 661.1h1v3.8h-1zM60 661.1h1v3.8h-1zM61 658.5h1v6.4h-1zM62 653.3h1v9.0h-1zM63 655.9h1v9.0h-1zM64 655.9h1v11.6h-1zM65 658.5h1v9.0h-1zM66 648.1h1v16.8h-1zM67 648.1h1v14.2h-1zM68 661.1h1v6.7h-1zM69 658.5h1v9.3h-1zM70 650.7h1v14.2h-1zM71 655.9h1v11.9h-1zM72 666.3h1v1.5h-1zM73 650.7h1v17.1h-1zM74 653.3h1v6.4h-1zM75 655.9h1v11.9h-1zM76 661.1h1v6.7h-1zM77 653.3h1v9.0h-1zM78 655.9h1v11.6h-1zM79 661.1h1v6.4h-1zM80 653.3h1v9.0h-1zM81 653.3h1v14.2h-1zM82 658.5h1v9.0h-1zM83 655.9h1v9.0h-1zM84 658.5h1v6.4h-1zM85 655.9h1v9.0h-1zM86 658.5h1v9.0h-1zM87 655.9h1v6.4h-1zM88 658.5h1v6.4h-1zM89 653.3h1v9.0h-1zM90 655.9h1v6.4h-1zM91 655.9h1v9.0h-1zM92 655.9h1v9.0h-1zM93 655.9h1v11.6h-1zM94 658.5h1v9.0h-1zM95 655.9h1v11.6h-1zM96 655.9h1v6.4h-1zM97 658.5h1v6.4h-1zM98 658.5h1v6.4h-1zM99 655.9h1v9.0h-1zM100 658.5h1v6.4h-1zM101 658.5h1v6.4h-1zM102 658.5h1v9.0h-1zM103 658.5h1v3.8h-1zM104 658.5h1v6.4h-1zM105 658.5h1v6.4h-1zM106 655.9h1v11.6h-1zM107 661.1h1v6.4h-1zM108 655.9h1v9.0h-1zM109 653.3h1v14.2h-1zM110 661.1h1v3.8h-1zM111 655.9h1v9.0h-1zM112 658.5h1v9.0h-1zM113 653.3h1v14.2h-1zM114 661.1h1v1.2h-1zM115 658.5h1v6.4h-1zM116 655.9h1v11.6h-1zM117 653.3h1v14.2h-1zM118 650.7h1v6.4h-1zM119 653.3h1v14.5h-1zM120 666.3h1v1.5h-1zM121 650.7h1v16.8h-1zM122 650.7h1v9.0h-1zM123 658.5h1v9.3h-1zM124 661.1h1v6.7h-1zM125 655.9h1v6.4h-1zM126 650.7h1v11.6h-1zM127 658.5h1v6.4h-1zM128 661.1h1v6.4h-1zM129 655.9h1v9.0h-1zM130 658.5h1v3.8h-1zM131 658.5h1v9.0h-1zM132 658.5h1v6.4h-1zM133 655.9h1v9.0h-1zM134 653.3h1v9.0h-1zM135 655.9h1v11.6h-1zM136 661.1h1v6.4h-1zM137 658.5h1v9.0h-1zM138 655.9h1v9.0h-1zM139 655.9h1v11.6h-1zM140 661.1h1v6.4h-1zM141 661.1h1v3.8h-1zM142 658.5h1v9.0h-1zM143 653.3h1v14.2h-1zM144 655.9h1v11.6h-1zM145 655.9h1v9.0h-1zM146 655.9h1v9.0h-1zM147 655.9h1v9.0h-1zM148 655.9h1v9.0h-1zM149 655.9h1v9.0h-1zM150 658.5h1v9.0h-1zM151 655.9h1v9.0h-1zM152 655.9h1v9.0h-1zM153 655.9h1v9.0h-1zM154 655.9h1v11.6h-1zM155 658.5h1v3.8h-1zM156 658.5h1v6.4h-1zM157 658.5h1v6.4h-1zM158 658.5h1v3.8h-1zM159 658.5h1v3.8h-1zM160 658.5h1v9.0h-1zM161 655.9h1v11.6h-1zM162 653.3h1v9.0h-1zM163 658.5h1v3.8h-1zM164 658.5h1v3.8h-1zM165 655.9h1v6.4h-1zM166 658.5h1v3.8h-1zM167 661.1h1v6.7h-1zM168 653.3h1v14.5h-1zM169 648.1h1v9.0h-1zM170 655.9h1v11.6h-1zM171 663.7h1v4.1h-1zM172 653.3h1v14.5h-1zM173 650.7h1v9.0h-1zM174 658.5h1v9.3h-1zM175 661.1h1v6.7h-1zM176 650.7h1v11.6h-1zM177 650.7h1v14.2h-1zM178 658.5h1v9.0h-1zM179 655.9h1v11.9h-1zM180 653.3h1v9.0h-1zM181 655.9h1v9.0h-1zM182 658.5h1v3.8h-1zM183 658.5h1v6.4h-1zM184 655.9h1v9.0h-1zM185 658.5h1v6.4h-1zM186 655.9h1v9.0h-1zM187 655.9h1v9.0h-1zM188 655.9h1v9.0h-1zM189 658.5h1v6.4h-1zM190 655.9h1v6.4h-1zM191 658.5h1v9.0h-1zM192 658.5h1v6.4h-1zM193 658.5h1v6.4h-1zM194 658.5h1v6.4h-1zM195 658.5h1v6.4h-1zM196 655.9h1v9.0h-1zM197 661.1h1v3.8h-1zM198 655.9h1v6.4h-1zM199 658.5h1v3.8h-1zM200 658.5h1v9.0h-1zM201 653.3h1v11.6h-1zM202 658.5h1v6.4h-1zM203 658.5h1v6.4h-1zM204 661.1h1v3.8h-1zM205 661.1h1v3.8h-1zM206 658.5h1v3.8h-1zM207 658.5h1v6.4h-1zM208 658.5h1v6.4h-1zM209 655.9h1v9.0h-1zM210 655.9h1v6.4h-1zM211 655.9h1v6.4h-1zM212 658.5h1v3.8h-1zM213 658.5h1v6.4h-1zM214 658.5h1v6.4h-1zM215 655.9h1v9.0h-1zM216 658.5h1v9.3h-1zM217 663.7h1v4.1h-1zM218 650.7h1v17.1h-1zM219 650.7h1v11.6h-1zM220 661.1h1v6.7h-1zM221 663.7h1v4.1h-1zM222 655.9h1v9.0h-1zM223 648.1h1v11.6h-1zM224 658.5h1v9.3h-1zM225 663.7h1v4.1h-1zM226 653.3h1v11.6h-1zM227 650.7h1v11.6h-1zM228 650.7h1v16.8h-1zM229 661.1h1v6.4h-1zM230 655.9h1v11.6h-1zM231 658.5h1v3.8h-1zM232 658.5h1v3.8h-1zM233 658.5h1v6.4h-1zM234 658.5h1v6.4h-1zM235 658.5h1v3.8h-1zM236 658.5h1v9.0h-1zM237 655.9h1v6.4h-1zM238 655.9h1v11.9h-1zM239 653.3h1v14.5h-1zM240 655.9h1v6.4h-1zM241 655.9h1v6.4h-1zM242 658.5h1v3.8h-1zM243 655.9h1v6.4h-1zM244 655.9h1v6.4h-1zM245 655.9h1v11.6h-1zM246 658.5h1v6.4h-1zM247 655.9h1v6.4h-1zM248 655.9h1v6.4h-1zM249 655.9h1v9.0h-1zM250 658.5h1v6.4h-1zM251 655.9h1v11.6h-1zM252 655.9h1v11.6h-1zM253 661.1h1v6.4h-1zM254 658.5h1v6.4h-1zM255 655.9h1v9.0h-1zM256 658.5h1v6.4h-1zM257 653.3h1v11.6h-1zM258 653.3h1v11.6h-1zM259 655.9h1v9.0h-1zM260 655.9h1v11.6h-1zM261 658.5h1v6.4h-1zM262 658.5h1v6.4h-1zM263 655.9h1v9.0h-1zM264 655.9h1v3.8h-1zM265 655.9h1v11.6h-1zM266 653.3h1v11.6h-1zM267 648.1h1v6.4h-1zM268 648.1h1v19.4h-1zM269 666.3h1v1.5h-1zM270 645.5h1v22.0h-1zM271 645.5h1v9.0h-1zM272 653.3h1v14.5h-1zM273 661.1h1v6.7h-1zM274 650.7h1v11.6h-1zM275 653.3h1v9.0h-1zM276 661.1h1v6.7h-1zM277 658.5h1v9.0h-1zM278 655.9h1v6.4h-1zM279 653.3h1v11.6h-1zM280 655.9h1v11.6h-1zM281 658.5h1v9.0h-1zM282 658.5h1v3.8h-1zM283 655.9h1v9.0h-1zM284 655.9h1v9.0h-1zM285 655.9h1v11.6h-1zM286 658.5h1v9.0h-1zM287 655.9h1v6.4h-1zM288 655.9h1v9.0h-1zM289 655.9h1v9.0h-1zM290 655.9h1v9.0h-1zM291 658.5h1v6.4h-1zM292 655.9h1v9.0h-1zM293 658.5h1v6.4h-1zM294 658.5h1v3.8h-1zM295 658.5h1v6.4h-1zM296 658.5h1v6.4h-1zM297 655.9h1v9.0h-1zM298 655.9h1v9.0h-1zM299 655.9h1v11.6h-1zM300 655.9h1v6.4h-1zM301 658.5h1v6.4h-1zM302 658.5h1v6.4h-1zM303 658.5h1v9.0h-1zM304 655.9h1v6.4h-1zM305 655.9h1v6.4h-1zM306 661.1h1v3.8h-1zM307 655.9h1v9.0h-1zM308 653.3h1v11.6h-1zM309 653.3h1v9.0h-1zM310 658.5h1v9.0h-1zM311 658.5h1v6.4h-1zM312 658.5h1v6.4h-1zM313 655.9h1v9.0h-1zM314 655.9h1v9.0h-1zM315 658.5h1v9.0h-1zM316 655.9h1v11.6h-1zM317 648.1h1v11.6h-1zM318 650.7h1v14.2h-1zM319 658.5h1v9.3h-1zM320 653.3h1v14.5h-1zM321 650.7h1v9.0h-1zM322 655.9h1v11.9h-1zM323 666.3h1v1.5h-1zM324 653.3h1v14.2h-1zM325 650.7h1v9.0h-1zM326 658.5h1v6.4h-1zM327 661.1h1v6.7h-1zM328 655.9h1v9.0h-1zM329 655.9h1v3.8h-1zM330 655.9h1v9.0h-1zM331 655.9h1v11.6h-1zM332 655.9h1v9.0h-1zM333 655.9h1v11.6h-1zM334 658.5h1v9.0h-1zM335 661.1h1v3.8h-1zM336 655.9h1v6.4h-1zM337 655.9h1v6.4h-1zM338 655.9h1v6.4h-1zM339 653.3h1v14.2h-1zM340 661.1h1v6.4h-1zM341 655.9h1v9.0h-1zM342 655.9h1v6.4h-1zM343 655.9h1v11.6h-1zM344 655.9h1v9.0h-1zM345 655.9h1v6.4h-1zM346 655.9h1v9.0h-1zM347 658.5h1v6.4h-1zM348 658.5h1v6.4h-1zM349 658.5h1v3.8h-1zM350 658.5h1v3.8h-1zM351 655.9h1v11.6h-1zM352 655.9h1v11.6h-1zM353 658.5h1v9.0h-1zM354 661.1h1v3.8h-1zM355 658.5h1v9.0h-1zM356 661.1h1v1.2h-1zM357 661.1h1v3.8h-1zM358 655.9h1v9.0h-1zM359 658.5h1v6.4h-1zM360 658.5h1v3.8h-1zM361 658.5h1v9.0h-1zM362 658.5h1v6.4h-1zM363 655.9h1v9.0h-1zM364 658.5h1v6.4h-1zM365 658.5h1v3.8h-1zM366 658.5h1v9.0h-1zM367 663.7h1v4.1h-1zM368 655.9h1v11.9h-1zM369 648.1h1v11.6h-1zM370 653.3h1v9.0h-1zM371 661.1h1v6.7h-1zM372 658.5h1v6.4h-1zM373 650.7h1v9.0h-1zM374 650.7h1v16.8h-1zM375 661.1h1v6.7h-1zM376 661.1h1v6.4h-1zM377 653.3h1v11.6h-1zM378 653.3h1v11.6h-1zM379 658.5h1v3.8h-1zM380 655.9h1v9.0h-1zM381 658.5h1v3.8h-1zM382 658.5h1v6.4h-1zM383 658.5h1v6.4h-1zM384 655.9h1v9.0h-1zM385 661.1h1v6.7h-1zM386 655.9h1v11.6h-1zM387 655.9h1v9.0h-1zM388 658.5h1v6.4h-1zM389 658.5h1v6.4h-1zM390 655.9h1v9.0h-1zM391 655.9h1v6.4h-1zM392 661.1h1v3.8h-1zM393 658.5h1v6.4h-1zM394 655.9h1v9.0h-1zM395 655.9h1v9.0h-1zM396 655.9h1v9.0h-1zM397 655.9h1v9.0h-1zM398 655.9h1v6.4h-1zM399 655.9h1v6.4h-1zM400 658.5h1v6.4h-1zM401 655.9h1v6.4h-1zM402 655.9h1v6.4h-1zM403 658.5h1v6.4h-1zM404 661.1h1v3.8h-1zM405 658.5h1v3.8h-1zM406 655.9h1v11.6h-1zM407 655.9h1v9.0h-1zM408 655.9h1v9.0h-1zM409 655.9h1v9.0h-1zM410 655.9h1v11.6h-1zM411 655.9h1v9.0h-1zM412 658.5h1v6.4h-1zM413 658.5h1v9.0h-1zM414 655.9h1v11.6h-1zM415 658.5h1v9.0h-1zM416 658.5h1v9.0h-1zM417 650.7h1v16.8h-1zM418 650.7h1v11.6h-1zM419 661.1h1v6.4h-1zM420 663.7h1v4.1h-1zM421 648.1h1v16.8h-1zM422 648.1h1v14.2h-1zM423 661.1h1v6.7h-1zM424 658.5h1v9.3h-1zM425 650.7h1v9.0h-1zM426 653.3h1v14.2h-1zM427 661.1h1v6.4h-1zM428 655.9h1v11.6h-1zM429 655.9h1v6.4h-1zM430 655.9h1v6.4h-1zM431 658.5h1v6.4h-1zM432 658.5h1v6.4h-1zM433 655.9h1v6.4h-1zM434 655.9h1v9.0h-1zM435 655.9h1v9.0h-1zM436 655.9h1v9.0h-1zM437 655.9h1v6.4h-1zM438 658.5h1v9.3h-1zM439 658.5h1v9.3h-1zM440 661.1h1v6.4h-1zM441 655.9h1v11.6h-1zM442 661.1h1v6.4h-1zM443 658.5h1v3.8h-1zM444 658.5h1v3.8h-1zM445 658.5h1v6.4h-1zM446 658.5h1v6.4h-1zM447 658.5h1v9.0h-1zM448 655.9h1v9.0h-1zM449 653.3h1v9.0h-1zM450 658.5h1v3.8h-1zM451 655.9h1v6.4h-1zM452 655.9h1v9.0h-1zM453 658.5h1v6.4h-1zM454 658.5h1v6.4h-1zM455 655.9h1v9.0h-1zM456 655.9h1v9.0h-1zM457 658.5h1v9.0h-1zM458 655.9h1v3.8h-1zM459 658.5h1v3.8h-1zM460 658.5h1v6.4h-1zM461 655.9h1v9.0h-1zM462 658.5h1v6.4h-1zM463 658.5h1v3.8h-1zM464 658.5h1v6.4h-1zM465 655.9h1v9.0h-1zM466 650.7h1v14.2h-1zM467 650.7h1v17.1h-1zM468 661.1h1v6.7h-1zM469 650.7h1v11.6h-1zM470 655.9h1v3.8h-1zM471 658.5h1v9.3h-1zM472 661.1h1v6.7h-1zM473 648.1h1v14.2h-1zM474 650.7h1v14.2h-1zM475 658.5h1v9.3h-1zM476 658.5h1v9.3h-1zM477 650.7h1v14.2h-1zM478 655.9h1v6.4h-1zM479 655.9h1v11.9h-1zM480 655.9h1v6.4h-1zM481 655.9h1v9.0h-1zM482 658.5h1v6.4h-1zM483 661.1h1v3.8h-1zM484 655.9h1v9.0h-1zM485 655.9h1v9.0h-1zM486 655.9h1v11.6h-1zM487 658.5h1v3.8h-1zM488 661.1h1v6.4h-1zM489 661.1h1v1.2h-1zM490 658.5h1v3.8h-1zM491 658.5h1v3.8h-1zM492 655.9h1v6.4h-1zM493 658.5h1v6.4h-1zM494 655.9h1v9.0h-1zM495 655.9h1v9.0h-1zM496 658.5h1v6.4h-1zM497 658.5h1v6.4h-1zM498 655.9h1v11.6h-1zM499 658.5h1v9.0h-1zM500 655.9h1v11.6h-1zM501 653.3h1v9.0h-1zM502 653.3h1v14.5h-1zM503 658.5h1v6.4h-1zM504 655.9h1v3.8h-1zM505 658.5h1v9.0h-1zM506 658.5h1v9.0h-1zM507 658.5h1v6.4h-1zM508 658.5h1v6.4h-1zM509 658.5h1v3.8h-1zM510 655.9h1v11.6h-1zM511 658.5h1v9.0h-1zM512 653.3h1v9.0h-1zM513 655.9h1v6.4h-1zM514 658.5h1v9.0h-1zM515 658.5h1v6.4h-1zM516 650.7h1v14.2h-1zM517 650.7h1v9.0h-1zM518 655.9h1v11.9h-1zM519 658.5h1v9.0h-1zM520 653.3h1v6.4h-1zM521 653.3h1v14.2h-1zM522 658.5h1v9.3h-1zM523 653.3h1v14.2h-1zM524 650.7h1v9.0h-1zM525 658.5h1v9.0h-1zM526 658.5h1v9.0h-1zM527 653.3h1v9.0h-1zM528 655.9h1v6.4h-1zM529 655.9h1v11.9h-1zM530 655.9h1v9.0h-1zM531 650.7h1v14.2h-1zM532 650.7h1v14.2h-1zM533 655.9h1v11.6h-1zM534 655.9h1v11.6h-1zM535 655.9h1v6.4h-1zM536 661.1h1v1.2h-1zM537 655.9h1v11.6h-1zM538 653.3h1v14.2h-1zM539 658.5h1v6.4h-1zM540 658.5h1v6.4h-1zM541 655.9h1v9.0h-1zM542 655.9h1v9.0h-1zM543 658.5h1v9.0h-1zM544 658.5h1v6.4h-1zM545 655.9h1v11.6h-1zM546 655.9h1v9.0h-1zM547 658.5h1v6.4h-1zM548 658.5h1v9.0h-1zM549 655.9h1v6.4h-1zM550 655.9h1v6.4h-1zM551 658.5h1v6.4h-1zM552 658.5h1v9.0h-1zM553 655.9h1v11.9h-1zM554 655.9h1v11.6h-1zM555 658.5h1v9.0h-1zM556 655.9h1v11.6h-1zM557 661.1h1v6.4h-1zM558 655.9h1v11.6h-1zM559 655.9h1v9.0h-1zM560 655.9h1v9.0h-1zM561 655.9h1v6.4h-1zM562 661.1h1v1.2h-1zM563 655.9h1v6.4h-1zM564 655.9h1v3.8h-1zM565 658.5h1v3.8h-1zM566 658.5h1v6.4h-1zM567 661.1h1v6.7h-1zM568 653.3h1v14.5h-1zM569 653.3h1v6.4h-1zM570 653.3h1v14.5h-1zM571 666.3h1v1.5h-1zM572 655.9h1v11.6h-1zM573 650.7h1v6.4h-1zM574 655.9h1v11.9h-1zM575 663.7h1v4.1h-1zM576 658.5h1v9.0h-1zM577 653.3h1v9.0h-1zM578 658.5h1v3.8h-1zM579 658.5h1v6.4h-1zM580 653.3h1v14.2h-1zM581 653.3h1v11.6h-1zM582 655.9h1v11.6h-1zM583 655.9h1v11.6h-1zM584 658.5h1v6.4h-1zM585 658.5h1v3.8h-1zM586 655.9h1v6.4h-1zM587 658.5h1v3.8h-1zM588 661.1h1v3.8h-1zM589 658.5h1v6.4h-1zM590 658.5h1v3.8h-1zM591 655.9h1v9.0h-1zM592 658.5h1v6.4h-1zM593 658.5h1v6.4h-1zM594 653.3h1v11.6h-1zM595 655.9h1v11.6h-1zM596 658.5h1v3.8h-1zM597 658.5h1v9.0h-1zM598 655.9h1v9.0h-1zM599 655.9h1v11.9h-1zM600 658.5h1v6.4h-1zM601 655.9h1v6.4h-1zM602 658.5h1v3.8h-1zM603 658.5h1v6.4h-1zM604 658.5h1v6.4h-1zM605 653.3h1v11.6h-1zM606 655.9h1v9.0h-1zM607 661.1h1v3.8h-1zM608 658.5h1v6.4h-1zM609 653.3h1v6.4h-1zM610 658.5h1v9.0h-1zM611 655.9h1v9.0h-1zM612 658.5h1v9.0h-1zM613 658.5h1v9.0h-1zM614 658.5h1v6.4h-1zM615 661.1h1v6.4h-1zM616 650.7h1v11.6h-1zM617 648.1h1v19.4h-1zM618 666.3h1v1.5h-1zM619 653.3h1v14.5h-1zM620 648.1h1v9.0h-1zM621 655.9h1v11.6h-1zM622 663.7h1v4.1h-1zM623 653.3h1v14.2h-1zM624 648.1h1v9.0h-1zM625 655.9h1v11.6h-1zM626 658.5h1v9.3h-1zM627 653.3h1v9.0h-1zM628 650.7h1v14.2h-1zM629 661.1h1v6.4h-1zM630 658.5h1v6.4h-1zM631 658.5h1v9.0h-1zM632 653.3h1v11.6h-1zM633 661.1h1v6.4h-1zM634 655.9h1v9.0h-1zM635 655.9h1v9.0h-1zM636 658.5h1v3.8h-1zM637 658.5h1v9.0h-1zM638 658.5h1v6.4h-1zM639 658.5h1v9.3h-1zM640 650.7h1v11.6h-1zM641 658.5h1v3.8h-1zM642 658.5h1v3.8h-1zM643 661.1h1v6.7h-1zM644 655.9h1v9.0h-1zM645 655.9h1v9.0h-1zM646 655.9h1v6.4h-1zM647 661.1h1v3.8h-1zM648 658.5h1v9.0h-1zM649 658.5h1v6.4h-1zM650 655.9h1v9.0h-1zM651 661.1h1v3.8h-1zM652 658.5h1v6.4h-1zM653 655.9h1v6.4h-1zM654 655.9h1v9.0h-1zM655 655.9h1v11.6h-1zM656 658.5h1v9.0h-1zM657 655.9h1v11.6h-1zM658 655.9h1v9.0h-1zM659 655.9h1v9.0h-1zM660 655.9h1v9.0h-1zM661 655.9h1v6.4h-1zM662 658.5h1v6.4h-1zM663 658.5h1v6.4h-1zM664 653.3h1v9.0h-1zM665 658.5h1v3.8h-1zM666 653.3h1v9.0h-1zM667 650.7h1v6.4h-1zM668 655.9h1v9.0h-1zM669 663.7h1v4.1h-1zM670 653.3h1v14.5h-1zM671 650.7h1v9.0h-1zM672 650.7h1v14.2h-1zM673 663.7h1v4.1h-1zM674 655.9h1v11.6h-1zM675 653.3h1v3.8h-1zM676 653.3h1v11.6h-1zM677 658.5h1v9.3h-1zM678 658.5h1v3.8h-1zM679 655.9h1v6.4h-1zM680 655.9h1v9.0h-1zM681 658.5h1v6.4h-1zM682 658.5h1v6.4h-1zM683 658.5h1v9.0h-1zM684 655.9h1v9.0h-1zM685 655.9h1v6.4h-1zM686 655.9h1v6.4h-1zM687 658.5h1v9.0h-1zM688 655.9h1v11.6h-1zM689 658.5h1v6.4h-1zM690 658.5h1v9.3h-1zM691 658.5h1v9.0h-1zM692 658.5h1v9.0h-1zM693 655.9h1v6.4h-1zM694 655.9h1v9.0h-1zM695 655.9h1v9.0h-1zM696 658.5h1v6.4h-1zM697 655.9h1v9.0h-1zM698 658.5h1v9.0h-1zM699 658.5h1v6.4h-1zM700 653.3h1v9.0h-1zM701 658.5h1v9.0h-1zM702 658.5h1v9.0h-1zM703 658.5h1v6.4h-1zM704 655.9h1v9.0h-1zM705 655.9h1v6.4h-1zM706 655.9h1v11.6h-1zM707 658.5h1v6.4h-1zM708 655.9h1v6.4h-1zM709 658.5h1v9.0h-1zM710 653.3h1v9.0h-1zM711 655.9h1v9.0h-1zM712 658.5h1v9.0h-1zM713 658.5h1v9.0h-1zM714 661.1h1v6.4h-1zM715 658.5h1v6.4h-1zM716 653.3h1v11.6h-1zM717 648.1h1v16.8h-1zM718 653.3h1v6.4h-1zM719 658.5h1v9.0h-1zM720 658.5h1v9.3h-1zM721 650.7h1v9.0h-1zM722 653.3h1v11.6h-1zM723 661.1h1v6.7h-1zM724 661.1h1v6.7h-1zM725 653.3h1v9.0h-1zM726 650.7h1v14.2h-1zM727 658.5h1v6.4h-1zM728 661.1h1v3.8h-1zM729 655.9h1v9.0h-1zM730 658.5h1v6.4h-1zM731 658.5h1v9.0h-1zM732 658.5h1v9.0h-1zM733 655.9h1v9.0h-1zM734 655.9h1v9.0h-1zM735 658.5h1v6.4h-1zM736 661.1h1v3.8h-1zM737 653.3h1v14.2h-1zM738 658.5h1v9.0h-1zM739 658.5h1v9.0h-1zM740 658.5h1v6.4h-1zM741 658.5h1v6.4h-1zM742 658.5h1v3.8h-1zM743 658.5h1v3.8h-1zM744 655.9h1v6.4h-1zM745 658.5h1v6.4h-1zM746 658.5h1v6.4h-1zM747 658.5h1v6.4h-1zM748 653.3h1v11.6h-1zM749 658.5h1v9.0h-1zM750 658.5h1v3.8h-1zM751 658.5h1v9.0h-1zM752 658.5h1v6.4h-1zM753 661.1h1v3.8h-1zM754 653.3h1v11.6h-1zM755 655.9h1v11.6h-1zM756 655.9h1v11.6h-1zM757 658.5h1v3.8h-1zM758 658.5h1v3.8h-1zM759 653.3h1v6.4h-1zM760 653.3h1v11.6h-1zM761 655.9h1v9.0h-1zM762 655.9h1v11.6h-1zM763 655.9h1v9.0h-1zM764 655.9h1v6.4h-1zM765 655.9h1v6.4h-1zM766 658.5h1v9.0h-1zM767 666.3h1v1.5h-1zM768 650.7h1v16.8h-1zM769 648.1h1v9.0h-1zM770 655.9h1v11.9h-1zM771 663.7h1v4.1h-1zM772 650.7h1v14.2h-1zM773 653.3h1v9.0h-1zM774 661.1h1v6.7h-1zM775 658.5h1v9.3h-1zM776 653.3h1v6.4h-1zM777 653.3h1v14.5h-1zM778 661.1h1v6.7h-1zM779 661.1h1v3.8h-1zM780 655.9h1v9.0h-1zM781 661.1h1v3.8h-1zM782 661.1h1v6.4h-1zM783 655.9h1v9.0h-1zM784 655.9h1v9.0h-1zM785 655.9h1v9.0h-1zM786 655.9h1v9.0h-1zM787 655.9h1v9.0h-1zM788 655.9h1v9.0h-1zM789 655.9h1v11.6h-1zM790 653.3h1v14.2h-1zM791 653.3h1v14.2h-1zM792 658.5h1v3.8h-1zM793 658.5h1v3.8h-1zM794 658.5h1v6.4h-1zM795 653.3h1v11.6h-1zM796 658.5h1v9.0h-1zM797 658.5h1v6.4h-1zM798 655.9h1v6.4h-1zM799 655.9h1v6.4h-1zM800 658.5h1v1.2h-1zM801 655.9h1v6.4h-1zM802 658.5h1v3.8h-1zM803 658.5h1v3.8h-1zM804 658.5h1v3.8h-1zM805 658.5h1v3.8h-1zM806 658.5h1v6.4h-1zM807 658.5h1v9.0h-1zM808 655.9h1v6.4h-1zM809 658.5h1v6.4h-1zM810 658.5h1v9.0h-1zM811 655.9h1v6.4h-1zM812 655.9h1v6.4h-1zM813 650.7h1v14.2h-1zM814 650.7h1v14.2h-1zM815 655.9h1v6.4h-1zM816 653.3h1v14.2h-1zM817 645.5h1v11.6h-1zM818 655.9h1v11.6h-1zM819 663.7h1v4.1h-1zM820 653.3h1v14.2h-1zM821 645.5h1v9.0h-1zM822 653.3h1v14.2h-1zM823 666.3h1v1.5h-1zM824 655.9h1v11.6h-1zM825 653.3h1v6.4h-1zM826 653.3h1v14.2h-1zM827 661.1h1v6.4h-1zM828 658.5h1v6.4h-1zM829 658.5h1v3.8h-1zM830 653.3h1v9.0h-1zM831 658.5h1v6.4h-1zM832 658.5h1v6.4h-1zM833 655.9h1v6.4h-1zM834 655.9h1v9.0h-1zM835 655.9h1v9.0h-1zM836 655.9h1v6.4h-1zM837 655.9h1v6.4h-1zM838 655.9h1v9.0h-1zM839 655.9h1v9.0h-1zM840 655.9h1v11.6h-1zM841 658.5h1v9.3h-1zM842 661.1h1v3.8h-1zM843 655.9h1v6.4h-1zM844 661.1h1v1.2h-1zM845 655.9h1v11.6h-1zM846 655.9h1v11.6h-1zM847 661.1h1v6.4h-1zM848 658.5h1v6.4h-1zM849 655.9h1v6.4h-1zM850 655.9h1v11.6h-1zM851 658.5h1v9.0h-1zM852 655.9h1v9.0h-1zM853 655.9h1v6.4h-1zM854 658.5h1v6.4h-1zM855 655.9h1v9.0h-1zM856 655.9h1v9.0h-1zM857 655.9h1v6.4h-1zM858 658.5h1v6.4h-1zM859 658.5h1v9.3h-1zM860 653.3h1v14.5h-1zM861 653.3h1v11.6h-1zM862 655.9h1v9.0h-1zM863 658.5h1v6.4h-1zM864 653.3h1v11.6h-1zM865 658.5h1v6.4h-1zM866 658.5h1v9.3h-1zM867 661.1h1v6.7h-1zM868 648.1h1v14.2h-1zM869 653.3h1v11.6h-1zM870 661.1h1v6.7h-1zM871 655.9h1v11.9h-1zM872 648.1h1v11.6h-1zM873 648.1h1v19.4h-1zM874 666.3h1v1.5h-1zM875 655.9h1v11.9h-1zM876 655.9h1v1.2h-1zM877 655.9h1v9.0h-1zM878 658.5h1v9.0h-1zM879 658.5h1v3.8h-1zM880 655.9h1v9.0h-1zM881 661.1h1v6.4h-1zM882 658.5h1v9.0h-1zM883 655.9h1v11.6h-1zM884 655.9h1v6.4h-1zM885 655.9h1v9.0h-1zM886 658.5h1v3.8h-1zM887 658.5h1v6.4h-1zM888 653.3h1v11.6h-1zM889 655.9h1v9.0h-1zM890 655.9h1v9.0h-1zM891 658.5h1v6.4h-1zM892 655.9h1v9.0h-1zM893 655.9h1v11.6h-1zM894 655.9h1v11.6h-1zM895 655.9h1v6.4h-1zM896 655.9h1v6.4h-1zM897 655.9h1v9.0h-1zM898 655.9h1v9.0h-1zM899 655.9h1v9.0h-1zM900 658.5h1v6.4h-1zM901 658.5h1v6.4h-1zM902 653.3h1v11.6h-1zM903 655.9h1v9.0h-1zM904 658.5h1v3.8h-1zM905 658.5h1v6.4h-1zM906 658.5h1v6.4h-1zM907 658.5h1v3.8h-1zM908 653.3h1v9.0h-1zM909 658.5h1v3.8h-1zM910 658.5h1v6.4h-1zM911 658.5h1v6.4h-1zM912 661.1h1v3.8h-1zM913 655.9h1v6.4h-1zM914 655.9h1v9.0h-1zM915 661.1h1v3.8h-1zM916 653.3h1v11.6h-1zM917 645.5h1v11.6h-1zM918 653.3h1v9.0h-1zM919 661.1h1v6.7h-1zM920 653.3h1v14.5h-1zM921 650.7h1v9.0h-1zM922 650.7h1v11.6h-1zM923 661.1h1v6.7h-1zM924 658.5h1v9.3h-1zM925 650.7h1v11.6h-1zM926 650.7h1v9.0h-1zM927 658.5h1v9.0h-1zM928 658.5h1v9.3h-1zM929 655.9h1v11.6h-1zM930 653.3h1v6.4h-1zM931 653.3h1v9.0h-1zM932 661.1h1v6.7h-1zM933 658.5h1v9.3h-1zM934 658.5h1v6.4h-1zM935 655.9h1v9.0h-1zM936 655.9h1v9.0h-1zM937 658.5h1v6.4h-1zM938 655.9h1v9.0h-1zM939 655.9h1v6.4h-1zM940 653.3h1v11.6h-1zM941 658.5h1v6.4h-1zM942 655.9h1v11.6h-1zM943 650.7h1v16.8h-1zM944 658.5h1v3.8h-1zM945 658.5h1v6.4h-1zM946 655.9h1v9.0h-1zM947 655.9h1v11.6h-1zM948 661.1h1v3.8h-1zM949 658.5h1v6.4h-1zM950 653.3h1v11.6h-1zM951 661.1h1v1.2h-1zM952 655.9h1v6.4h-1zM953 653.3h1v9.0h-1zM954 653.3h1v11.6h-1zM955 653.3h1v11.6h-1zM956 653.3h1v14.2h-1zM957 658.5h1v3.8h-1zM958 653.3h1v14.2h-1zM959 653.3h1v6.4h-1zM960 658.5h1v6.4h-1zM961 658.5h1v9.0h-1zM962 655.9h1v11.6h-1zM963 658.5h1v6.4h-1zM964 658.5h1v6.4h-1zM965 658.5h1v6.4h-1zM966 658.5h1v6.4h-1zM967 658.5h1v9.3h-1zM968 663.7h1v4.1h-1zM969 648.1h1v16.8h-1zM970 653.3h1v9.0h-1zM971 661.1h1v6.7h-1zM972 655.9h1v11.9h-1zM973 645.5h1v11.6h-1zM974 650.7h1v11.6h-1zM975 661.1h1v6.7h-1zM976 650.7h1v17.1h-1zM977 650.7h1v11.6h-1zM978 655.9h1v11.6h-1zM979 655.9h1v11.6h-1zM980 653.3h1v9.0h-1zM981 655.9h1v9.0h-1zM982 655.9h1v11.9h-1zM983 658.5h1v3.8h-1zM984 655.9h1v11.6h-1zM985 658.5h1v6.4h-1zM986 661.1h1v3.8h-1zM987 655.9h1v9.0h-1zM988 655.9h1v9.0h-1zM989 658.5h1v6.4h-1zM990 658.5h1v3.8h-1zM991 658.5h1v3.8h-1zM992 655.9h1v9.0h-1zM993 658.5h1v6.4h-1zM994 655.9h1v11.6h-1zM995 658.5h1v3.8h-1zM996 655.9h1v6.4h-1zM997 661.1h1v3.8h-1zM998 658.5h1v9.3h-1zM999 655.9h1v9.0h-1zM1000 655.9h1v9.0h-1zM1001 658.5h1v6.4h-1zM1002 655.9h1v6.4h-1zM1003 650.7h1v11.6h-1zM1004 650.7h1v14.2h-1zM1005 661.1h1v6.7h-1zM1006 658.5h1v9.3h-1zM1007 658.5h1v6.4h-1zM1008 655.9h1v11.6h-1zM1009 655.9h1v11.6h-1zM1010 655.9h1v9.0h-1zM1011 661.1h1v3.8h-1zM1012 658.5h1v6.4h-1zM1013 655.9h1v9.0h-1zM1014 655.9h1v9.0h-1zM1015 658.5h1v3.8h-1zM1016 655.9h1v11.9h-1zM1017 653.3h1v14.5h-1zM1018 650.7h1v6.4h-1zM1019 650.7h1v17.1h-1zM1020 658.5h1v9.3h-1z" fill="#ff00ff" shape-rendering="geometricPrecision"/>
  <path id="ch1" d="M21 108.5h1v3.7h-1zM22 111.0h1v1.1h-1zM23 108.5h1v3.7h-1zM24 108.5h1v3.7h-1zM25 108.5h1v3.7h-1zM26 108.5h1v6.3h-1zM27 108.5h1v3.7h-1zM28 108.5h1v6.3h-1zM29 108.5h1v6.3h-1zM30 108.5h1v6.3h-1zM31 108.5h1v3.7h-1zM32 108.5h1v6.3h-1zM33 108.5h1v3.7h-1zM34 108.5h1v6.3h-1zM35 105.9h1v8.9h-1zM36 108.5h1v3.7h-1zM37 111.0h1v3.7h-1zM38 108.5h1v6.3h-1zM39 108.5h1v3.7h-1zM40 108.5h1v6.3h-1zM41 108.5h1v3.7h-1zM42 108.5h1v6.3h-1zM43 108.5h1v6.3h-1zM44 108.5h1v6.3h-1zM45 108.5h1v3.7h-1zM46 111.0h1v1.1h-1zM47 111.0h1v3.7h-1zM48 111.0h1v1.1h-1zM49 105.9h1v8.9h-1zM50 111.0h1v1.1h-1zM51 108.5h1v6.3h-1zM52 105.9h1v6.3h-1zM53 108.5h1v6.3h-1zM54 108.5h1v6.3h-1zM55 105.9h1v6.3h-1zM56 108.5h1v6.3h-1zM57 111.0h1v3.7h-1zM58 108.5h1v6.3h-1zM59 108.5h1v3.7h-1zM60 108.5h1v6.3h-1zM61 108.5h1v6.3h-1zM62 108.5h1v6.3h-1zM63 108.5h1v6.3h-1zM64 108.5h1v6.3h-1zM65 108.5h1v6.3h-1zM66 105.9h1v8.9h-1zM67 105.9h1v6.3h-1zM68 108.5h1v6.3h-1zM69 108.5h1v6.3h-1zM70 108.5h1v3.7h-1zM71 108.5h1v3.7h-1zM72 111.0h1v3.7h-1zM73 108.5h1v3.7h-1zM74 108.5h1v3.7h-1zM75 108.5h1v3.7h-1zM76 108.5h1v3.7h-1zM77 105.9h1v6.3h-1zM78 105.9h1v6.3h-1zM79 111.0h1v1.1h-1zM80 108.5h1v6.3h-1zM81 108.5h1v6.3h-1zM82 108.5h1v6.3h-1zM83 108.5h1v6.3h-1zM84 108.5h1v3.7h-1zM85 108.5h1v3.7h-1zM86 105.9h1v8.9h-1zM87 111.0h1v3.7h-1zM88 108.5h1v6.3h-1zM89 108.5h1v6.3h-1zM90 108.5h1v6.3h-1zM91 108.5h1v6.3h-1zM92 105.9h1v6.3h-1zM93 108.5h1v3.7h-1zM94 111.0h1v1.1h-1zM95 108.5h1v3.7h-1zM96 108.5h1v3.7h-1zM97 108.5h1v3.7h-1zM98 108.5h1v3.7h-1zM99 105.9h1v8.9h-1zM100 108.5h1v6.3h-1zM101 111.0h1v3.7h-1zM102 108.5h1v3.7h-1zM103 111.0h1v3.7h-1zM104 111.0h1v3.7h-1zM105 108.5h1v3.7h-1zM106 111.0h1v1.1h-1zM107 111.0h1v1.1h-1zM108 108.5h1v3.7h-1zM109 108.5h1v3.7h-1zM110 108.5h1v6.3h-1zM111 108.5h1v3.7h-1zM112 108.5h1v3.7h-1zM113 108.5h1v3.7h-1zM114 108.5h1v6.3h-1zM115 108.5h1v3.7h-1zM116 108.5h1v3.7h-1zM117 108.5h1v3.7h-1zM118 105.9h1v6.3h-1zM119 108.5h1v3.7h-1zM120 108.5h1v3.7h-1zM121 108.5h1v3.7h-1zM122 108.5h1v3.7h-1zM123 108.5h1v3.7h-1zM124 111.0h1v3.7h-1zM125 105.9h1v8.9h-1zM126 111.0h1v3.7h-1zM127 108.5h1v6.3h-1zM128 108.5h1v6.3h-1zM129 108.5h1v6.3h-1zM130 108.5h1v6.3h-1zM131 108.5h1v6.3h-1zM132 108.5h1v6.3h-1zM133 108.5h1v6.3h-1zM134 108.5h1v6.3h-1zM135 108.5h1v6.3h-1zM136 108.5h1v6.3h-1zM137 108.5h1v3.7h-1zM138 108.5h1v3.7h-1zM139 108.5h1v6.3h-1zM140 108.5h1v3.7h-1zM141 108.5h1v6.3h-1zM142 108.5h1v8.9h-1zM143 111.0h1v1.1h-1zM144 108.5h1v3.7h-1zM145 108.5h1v3.7h-1zM146 108.5h1v3.7h-1zM147 108.5h1v3.7h-1zM148 108.5h1v6.3h-1zM149 108.5h1v6.3h-1zM150 108.5h1v6.3h-1zM151 108.5h1v3.7h-1zM152 108.5h1v6.3h-1zM153 108.5h1v6.3h-1zM154 108.5h1v6.3h-1zM155 108.5h1v3.7h-1zM156 108.5h1v3.7h-1zM157 108.5h1v6.3h-1zM158 108.5h1v6.3h-1zM159 108.5h1v3.7h-1zM160 108.5h1v3.7h-1zM161 108.5h1v3.7h-1zM162 108.5h1v3.7h-1zM163 108.5h1v6.3h-1zM164 108.5h1v6.3h-1zM165 108.5h1v6.3h-1zM166 111.0h1v3.7h-1zM167 105.9h1v8.9h-1zM168 111.0h1v3.7h-1zM169 108.5h1v3.7h-1zM170 111.0h1v1.1h-1zM171 108.5h1v6.3h-1zM172 108.5h1v6.3h-1zM173 108.5h1v3.7h-1zM174 111.0h1v1.1h-1zM175 108.5h1v3.7h-1zM176 111.0h1v3.7h-1zM177 108.5h1v6.3h-1zM178 108.5h1v6.3h-1zM179 108.5h1v6.3h-1zM180 108.5h1v3.7h-1zM181 108.5h1v3.7h-1zM182 111.0h1v3.7h-1zM183 108.5h1v6.3h-1zM184 108.5h1v6.3h-1zM185 111.0h1v3.7h-1zM186 108.5h1v6.3h-1zM187 111.0h1v3.7h-1zM188 113.7h1v3.7h-1zM189 111.0h1v8.9h-1zM190 113.7h1v6.3h-1zM191 113.7h1v6.3h-1zM192 116.2h1v6.3h-1zM193 118.9h1v3.7h-1zM194 118.9h1v6.3h-1zM195 118.9h1v6.3h-1zM196 121.5h1v3.7h-1zM197 124.0h1v3.7h-1zM198 124.0h1v3.7h-1zM199 124.0h1v6.3h-1zM200 126.7h1v6.3h-1zM201 126.7h1v8.9h-1zM202 126.7h1v8.9h-1zM203 129.2h1v6.3h-1zM204 131.8h1v6.3h-1zM205 131.8h1v6.3h-1zM206 134.4h1v6.3h-1zM207 134.4h1v6.3h-1zM208 137.0h1v6.3h-1zM209 139.6h1v3.7h-1zM210 139.6h1v3.7h-1zM211 142.2h1v3.7h-1zM212 142.2h1v6.3h-1zM213 144.8h1v3.7h-1zM214 144.8h1v3.7h-1zM215 144.8h1v6.3h-1zM216 150.0h1v3.7h-1zM217 150.0h1v6.3h-1zM218 155.2h1v3.7h-1zM219 155.2h1v6.3h-1zM220 157.8h1v8.9h-1zM221 163.0h1v8.9h-1zM222 168.2h1v14.1h-1zM223 181.2h1v8.9h-1zM224 189.1h1v11.5h-1zM225 199.4h1v11.5h-1zM226 209.8h1v11.5h-1zM227 220.2h1v8.9h-1zM228 228.1h1v6.3h-1zM229 228.1h1v11.5h-1zM230 233.2h1v6.3h-1zM231 238.4h1v3.7h-1zM232 241.0h1v3.7h-1zM233 243.7h1v11.5h-1zM234 254.0h1v3.7h-1zM235 256.7h1v11.5h-1zM236 267.1h1v8.9h-1zM237 274.8h1v6.3h-1zM238 280.1h1v11.5h-1zM239 290.4h1v6.3h-1zM240 295.7h1v3.7h-1zM241 298.2h1v11.5h-1zM242 308.7h1v6.3h-1zM243 313.8h1v3.7h-1zM244 316.4h1v6.3h-1zM245 321.7h1v8.9h-1zM246 324.2h1v8.9h-1zM247 329.4h1v6.3h-1zM248 334.7h1v6.3h-1zM249 337.2h1v6.3h-1zM250 342.4h1v8.9h-1zM251 350.2h1v1.1h-1zM252 345.1h1v6.3h-1zM253 347.7h1v6.3h-1zM254 347.7h1v3.7h-1zM255 347.7h1v6.3h-1zM256 350.2h1v3.7h-1zM257 350.2h1v3.7h-1zM258 347.7h1v3.7h-1zM259 347.7h1v6.3h-1zM260 347.7h1v6.3h-1zM261 347.7h1v6.3h-1zM262 347.7h1v6.3h-1zM263 347.7h1v3.7h-1zM264 342.4h1v6.3h-1zM265 337.2h1v8.9h-1zM266 332.1h1v8.9h-1zM267 332.1h1v3.7h-1zM268 329.4h1v3.7h-1zM269 321.7h1v8.9h-1zM270 321.7h1v3.7h-1zM271 319.1h1v6.3h-1zM272 316.4h1v6.3h-1zM273 311.2h1v8.9h-1zM274 311.2h1v3.7h-1zM275 306.1h1v6.3h-1zM276 300.8h1v8.9h-1zM277 298.2h1v3.7h-1zM278 293.1h1v8.9h-1zM279 290.4h1v6.3h-1zM280 287.8h1v6.3h-1zM281 285.2h1v3.7h-1zM282 282.7h1v3.7h-1zM283 277.4h1v6.3h-1zM284 272.2h1v8.9h-1zM285 269.7h1v6.3h-1zM286 267.1h1v3.7h-1zM287 261.8h1v6.3h-1zM288 259.2h1v6.3h-1zM289 256.7h1v6.3h-1zM290 254.0h1v6.3h-1zM291 248.8h1v8.9h-1zM292 246.2h1v3.7h-1zM293 243.7h1v3.7h-1zM294 238.4h1v8.9h-1zM295 238.4h1v6.3h-1zM296 233.2h1v6.3h-1zM297 228.1h1v6.3h-1zM298 228.1h1v6.3h-1zM299 225.4h1v6.3h-1zM300 220.2h1v6.3h-1zM301 217.6h1v6.3h-1zM302 215.1h1v6.3h-1zM303 212.4h1v6.3h-1zM304 209.8h1v8.9h-1zM305 207.2h1v6.3h-1zM306 204.6h1v6.3h-1zM307 204.6h1v3.7h-1zM308 199.4h1v6.3h-1zM309 196.8h1v6.3h-1zM310 196.8h1v6.3h-1zM311 194.2h1v6.3h-1zM312 194.2h1v1.1h-1zM313 189.1h1v6.3h-1zM314 186.4h1v8.9h-1zM315 183.8h1v6.3h-1zM316 183.8h1v6.3h-1zM317 183.8h1v1.1h-1zM318 178.6h1v6.3h-1zM319 176.1h1v8.9h-1zM320 176.1h1v3.7h-1zM321 173.4h1v6.3h-1zM322 170.8h1v6.3h-1zM323 168.2h1v6.3h-1zM324 165.6h1v8.9h-1zM325 165.6h1v6.3h-1zM326 165.6h1v3.7h-1zM327 160.4h1v6.3h-1zM328 160.4h1v6.3h-1zM329 160.4h1v6.3h-1zM330 160.4h1v3.7h-1zM331 157.8h1v6.3h-1zM332 155.2h1v3.7h-1zM333 155.2h1v3.7h-1zM334 152.6h1v3.7h-1zM335 152.6h1v3.7h-1zM336 150.0h1v6.3h-1zM337 150.0h1v6.3h-1zM338 150.0h1v3.7h-1zM339 147.4h1v6.3h-1zM340 147.4h1v3.7h-1zM341 147.4h1v3.7h-1zM342 144.8h1v6.3h-1zM343 144.8h1v3.7h-1zM344 142.2h1v3.7h-1zM345 139.6h1v8.9h-1zM346 142.2h1v6.3h-1zM347 139.6h1v3.7h-1zM348 137.0h1v6.3h-1zM349 137.0h1v3.7h-1zM350 134.4h1v6.3h-1zM351 134.4h1v6.3h-1zM352 131.8h1v6.3h-1zM353 131.8h1v6.3h-1zM354 131.8h1v3.7h-1zM355 131.8h1v3.7h-1zM356 129.2h1v6.3h-1zM357 129.2h1v3.7h-1zM358 126.7h1v6.3h-1zM359 126.7h1v6.3h-1zM360 126.7h1v3.7h-1zM361 126.7h1v6.3h-1zM362 124.0h1v6.3h-1zM363 124.0h1v6.3h-1zM364 124.0h1v6.3h-1zM365 124.0h1v3.7h-1zM366 124.0h1v3.7h-1zM367 124.0h1v6.3h-1zM368 121.5h1v3.7h-1zM369 118.9h1v8.9h-1zM370 118.9h1v6.3h-1zM371 118.9h1v6.3h-1zM372 121.5h1v3.7h-1zM373 118.9h1v6.3h-1zM374 118.9h1v8.9h-1zM375 118.9h1v8.9h-1zM376 118.9h1v6.3h-1zM377 116.2h1v6.3h-1zM378 116.2h1v6.3h-1zM379 116.2h1v6.3h-1zM380 118.9h1v3.7h-1zM381 118.9h1v3.7h-1zM382 116.2h1v6.3h-1zM383 116.2h1v6.3h-1zM384 116.2h1v3.7h-1zM385 116.2h1v3.7h-1zM386 116.2h1v6.3h-1zM387 116.2h1v3.7h-1zM388 116.2h1v6.3h-1zM389 116.2h1v6.3h-1zM390 113.7h1v8.9h-1zM391 116.2h1v6.3h-1zM392 116.2h1v1.1h-1zM393 113.7h1v3.7h-1zM394 113.7h1v6.3h-1zM395 116.2h1v3.7h-1zM396 113.7h1v3.7h-1zM397 113.7h1v3.7h-1zM398 113.7h1v3.7h-1zM399 113.7h1v3.7h-1zM400 113.7h1v3.7h-1zM401 113.7h1v6.3h-1zM402 113.7h1v3.7h-1zM403 113.7h1v3.7h-1zM404 113.7h1v6.3h-1zM405 113.7h1v6.3h-1zM406 116.2h1v1.1h-1zM407 116.2h1v3.7h-1zM408 113.7h1v3.7h-1zM409 113.7h1v3.7h-1zM410 113.7h1v3.7h-1zM411 113.7h1v3.7h-1zM412 113.7h1v3.7h-1zM413 111.0h1v6.3h-1zM414 111.0h1v6.3h-1zM415 111.0h1v6.3h-1zM416 111.0h1v8.9h-1zM417 113.7h1v6.3h-1zM418 113.7h1v3.7h-1zM419 113.7h1v6.3h-1zM420 111.0h1v6.3h-1zM421 111.0h1v3.7h-1zM422 113.7h1v3.7h-1zM423 113.7h1v3.7h-1zM424 113.7h1v3.7h-1zM425 113.7h1v3.7h-1zM426 113.7h1v3.7h-1zM427 113.7h1v6.3h-1zM428 113.7h1v6.3h-1zM429 113.7h1v3.7h-1zM430 113.7h1v3.7h-1zM431 113.7h1v6.3h-1zM432 113.7h1v6.3h-1zM433 113.7h1v3.7h-1zM434 113.7h1v6.3h-1zM435 113.7h1v3.7h-1zM436 113.7h1v3.7h-1zM437 113.7h1v3.7h-1zM438 111.0h1v6.3h-1zM439 111.0h1v6.3h-1zM440 113.7h1v3.7h-1zM441 113.7h1v3.7h-1zM442 113.7h1v3.7h-1zM443 113.7h1v3.7h-1zM444 113.7h1v3.7h-1zM445 113.7h1v3.7h-1zM446 111.0h1v8.9h-1zM447 113.7h1v3.7h-1zM448 113.7h1v6.3h-1zM449 113.7h1v3.7h-1zM450 113.7h1v3.7h-1zM451 113.7h1v3.7h-1zM452 116.2h1v3.7h-1zM453 111.0h1v8.9h-1zM454 113.7h1v3.7h-1zM455 113.7h1v6.3h-1zM456 113.7h1v6.3h-1zM457 113.7h1v6.3h-1zM458 113.7h1v3.7h-1zM459 111.0h1v8.9h-1zM460 116.2h1v1.1h-1zM461 113.7h1v3.7h-1zM462 113.7h1v3.7h-1zM463 113.7h1v6.3h-1zM464 116.2h1v3.7h-1zM465 113.7h1v6.3h-1zM466 116.2h1v3.7h-1zM467 113.7h1v6.3h-1zM468 113.7h1v6.3h-1zM469 113.7h1v6.3h-1zM470 116.2h1v3.7h-1zM471 116.2h1v3.7h-1zM472 116.2h1v3.7h-1zM473 116.2h1v3.7h-1zM474 116.2h1v3.7h-1zM475 113.7h1v6.3h-1zM476 113.7h1v6.3h-1zM477 113.7h1v8.9h-1zM478 116.2h1v3.7h-1zM479 116.2h1v3.7h-1zM480 113.7h1v3.7h-1zM481 116.2h1v3.7h-1zM482 116.2h1v3.7h-1zM483 116.2h1v3.7h-1zM484 116.2h1v3.7h-1zM485 116.2h1v3.7h-1zM486 113.7h1v6.3h-1zM487 113.7h1v6.3h-1zM488 116.2h1v3.7h-1zM489 113.7h1v6.3h-1zM490 113.7h1v6.3h-1zM491 116.2h1v3.7h-1zM492 113.7h1v6.3h-1zM493 113.7h1v6.3h-1zM494 113.7h1v6.3h-1zM495 116.2h1v6.3h-1zM496 116.2h1v6.3h-1zM497 113.7h1v6.3h-1zM498 113.7h1v6.3h-1zM499 116.2h1v3.7h-1zM500 116.2h1v3.7h-1zM501 113.7h1v6.3h-1zM502 116.2h1v3.7h-1zM503 113.7h1v6.3h-1zM504 113.7h1v6.3h-1zM505 116.2h1v3.7h-1zM506 113.7h1v6.3h-1zM507 113.7h1v6.3h-1zM508 113.7h1v6.3h-1zM509 116.2h1v3.7h-1zM510 116.2h1v3.7h-1zM511 116.2h1v3.7h-1zM512 116.2h1v3.7h-1zM513 116.2h1v3.7h-1zM514 113.7h1v3.7h-1zM515 116.2h1v3.7h-1zM516 113.7h1v6.3h-1zM517 113.7h1v6.3h-1zM518 113.7h1v3.7h-1zM519 113.7h1v6.3h-1zM520 113.7h1v6.3h-1zM521 113.7h1v3.7h-1zM522 111.0h1v6.3h-1zM523 113.7h1v3.7h-1zM524 111.0h1v6.3h-1zM525 113.7h1v3.7h-1zM526 111.0h1v6.3h-1zM527 113.7h1v3.7h-1zM528 113.7h1v6.3h-1zM529 111.0h1v6.3h-1zM530 111.0h1v6.3h-1zM531 111.0h1v6.3h-1zM532 113.7h1v3.7h-1zM533 111.0h1v6.3h-1zM534 113.7h1v3.7h-1zM535 113.7h1v3.7h-1zM536 111.0h1v3.7h-1zM537 113.7h1v3.7h-1zM538 111.0h1v3.7h-1zM539 111.0h1v6.3h-1zM540 113.7h1v3.7h-1zM541 113.7h1v3.7h-1zM542 113.7h1v3.7h-1zM543 111.0h1v3.7h-1zM544 111.0h1v6.3h-1zM545 111.0h1v6.3h-1zM546 108.5h1v6.3h-1zM547 111.0h1v3.7h-1zM548 111.0h1v6.3h-1zM549 111.0h1v3.7h-1zM550 113.7h1v3.7h-1zM551 111.0h1v6.3h-1zM552 111.0h1v3.7h-1zM553 111.0h1v3.7h-1zM554 111.0h1v6.3h-1zM555 111.0h1v3.7h-1zM556 111.0h1v6.3h-1zM557 111.0h1v3.7h-1zM558 111.0h1v6.3h-1zM559 108.5h1v6.3h-1zM560 111.0h1v3.7h-1zM561 108.5h1v8.9h-1zM562 111.0h1v6.3h-1zM563 111.0h1v3.7h-1zM564 111.0h1v6.3h-1zM565 111.0h1v3.7h-1zM566 111.0h1v6.3h-1zM567 111.0h1v3.7h-1zM568 111.0h1v6.3h-1zM569 111.0h1v3.7h-1zM570 111.0h1v3.7h-1zM571 108.5h1v6.3h-1zM572 111.0h1v6.3h-1zM573 111.0h1v3.7h-1zM574 111.0h1v3.7h-1zM575 111.0h1v3.7h-1zM576 108.5h1v6.3h-1zM577 111.0h1v3.7h-1zM578 111.0h1v3.7h-1zM579 111.0h1v6.3h-1zM580 111.0h1v6.3h-1zM581 111.0h1v3.7h-1zM582 111.0h1v3.7h-1zM583 111.0h1v3.7h-1zM584 111.0h1v3.7h-1zM585 111.0h1v3.7h-1zM586 111.0h1v3.7h-1zM587 108.5h1v6.3h-1zM588 108.5h1v6.3h-1zM589 111.0h1v3.7h-1zM590 113.7h1v1.1h-1zM591 111.0h1v3.7h-1zM592 108.5h1v6.3h-1zM593 111.0h1v3.7h-1zM594 111.0h1v3.7h-1zM595 111.0h1v6.3h-1zM596 111.0h1v6.3h-1zM597 111.0h1v6.3h-1zM598 113.7h1v1.1h-1zM599 111.0h1v8.9h-1zM600 111.0h1v6.3h-1zM601 111.0h1v3.7h-1zM602 111.0h1v6.3h-1zM603 111.0h1v6.3h-1zM604 108.5h1v8.9h-1zM605 113.7h1v3.7h-1zM606 113.7h1v3.7h-1zM607 111.0h1v6.3h-1zM608 111.0h1v6.3h-1zM609 113.7h1v1.1h-1zM610 111.0h1v8.9h-1zM611 113.7h1v3.7h-1zM612 113.7h1v3.7h-1zM613 113.7h1v6.3h-1zM614 111.0h1v8.9h-1zM615 111.0h1v6.3h-1zM616 111.0h1v6.3h-1zM617 108.5h1v8.9h-1zM618 111.0h1v6.3h-1zM619 113.7h1v3.7h-1zM620 111.0h1v6.3h-1zM621 111.0h1v6.3h-1zM622 111.0h1v3.7h-1zM623 113.7h1v6.3h-1zM624 111.0h1v6.3h-1zM625 113.7h1v3.7h-1zM626 111.0h1v3.7h-1zM627 113.7h1v6.3h-1zM628 111.0h1v8.9h-1zM629 113.7h1v3.7h-1zM630 111.0h1v6.3h-1zM631 111.0h1v6.3h-1zM632 111.0h1v6.3h-1zM633 113.7h1v3.7h-1zM634 111.0h1v8.9h-1zM635 111.0h1v3.7h-1zM636 113.7h1v1.1h-1zM637 113.7h1v3.7h-1zM638 113.7h1v3.7h-1zM639 111.0h1v6.3h-1zM640 111.0h1v6.3h-1zM641 113.7h1v3.7h-1zM642 113.7h1v3.7h-1zM643 113.7h1v3.7h-1zM644 113.7h1v3.7h-1zM645 113.7h1v3.7h-1zM646 113.7h1v3.7h-1zM647 111.0h1v6.3h-1zM648 111.0h1v6.3h-1zM649 111.0h1v6.3h-1zM650 111.0h1v8.9h-1zM651 113.7h1v3.7h-1zM652 113.7h1v3.7h-1zM653 113.7h1v6.3h-1zM654 113.7h1v6.3h-1zM655 113.7h1v3.7h-1zM656 113.7h1v3.7h-1zM657 113.7h1v3.7h-1zM658 113.7h1v3.7h-1zM659 113.7h1v3.7h-1zM660 113.7h1v3.7h-1zM661 113.7h1v6.3h-1zM662 111.0h1v6.3h-1zM663 111.0h1v6.3h-1zM664 113.7h1v3.7h-1zM665 113.7h1v3.7h-1zM666 113.7h1v3.7h-1zM667 111.0h1v6.3h-1zM668 111.0h1v8.9h-1zM669 113.7h1v6.3h-1zM670 113.7h1v3.7h-1zM671 113.7h1v3.7h-1zM672 111.0h1v6.3h-1zM673 113.7h1v3.7h-1zM674 113.7h1v3.7h-1zM675 111.0h1v8.9h-1zM676 113.7h1v3.7h-1zM677 111.0h1v6.3h-1zM678 113.7h1v6.3h-1zM679 111.0h1v6.3h-1zM680 111.0h1v8.9h-1zM681 113.7h1v3.7h-1zM682 111.0h1v6.3h-1zM683 111.0h1v6.3h-1zM684 113.7h1v3.7h-1zM685 113.7h1v6.3h-1zM686 113.7h1v6.3h-1zM687 113.7h1v3.7h-1zM688 113.7h1v3.7h-1zM689 113.7h1v3.7h-1zM690 111.0h1v8.9h-1zM691 111.0h1v8.9h-1zM692 113.7h1v3.7h-1zM693 113.7h1v3.7h-1zM694 113.7h1v1.1h-1zM695 113.7h1v3.7h-1zM696 113.7h1v3.7h-1zM697 113.7h1v3.7h-1zM698 113.7h1v3.7h-1zM699 113.7h1v3.7h-1zM700 113.7h1v6.3h-1zM701 111.0h1v6.3h-1zM702 111.0h1v6.3h-1zM703 113.7h1v3.7h-1zM704 111.0h1v6.3h-1zM705 111.0h1v6.3h-1zM706 111.0h1v6.3h-1zM707 113.7h1v3.7h-1zM708 113.7h1v3.7h-1zM709 111.0h1v3.7h-1zM710 111.0h1v6.3h-1zM711 111.0h1v6.3h-1zM712 111.0h1v6.3h-1zM713 113.7h1v3.7h-1zM714 111.0h1v3.7h-1zM715 111.0h1v6.3h-1zM716 111.0h1v6.3h-1zM717 113.7h1v3.7h-1zM718 111.0h1v6.3h-1zM719 111.0h1v6.3h-1zM720 113.7h1v1.1h-1zM721 111.0h1v6.3h-1zM722 113.7h1v3.7h-1zM723 111.0h1v6.3h-1zM724 111.0h1v6.3h-1zM725 111.0h1v6.3h-1zM726 111.0h1v6.3h-1zM727 111.0h1v6.3h-1zM728 111.0h1v6.3h-1zM729 113.7h1v3.7h-1zM730 111.0h1v6.3h-1zM731 111.0h1v3.7h-1zM732 111.0h1v6.3h-1zM733 111.0h1v6.3h-1zM734 111.0h1v3.7h-1zM735 113.7h1v3.7h-1zM736 113.7h1v6.3h-1zM737 113.7h1v6.3h-1zM738 113.7h1v3.7h-1zM739 113.7h1v3.7h-1zM740 111.0h1v6.3h-1zM741 111.0h1v3.7h-1zM742 111.0h1v6.3h-1zM743 111.0h1v3.7h-1zM744 111.0h1v6.3h-1zM745 111.0h1v6.3h-1zM746 111.0h1v6.3h-1zM747 111.0h1v3.7h-1zM748 111.0h1v6.3h-1zM749 111.0h1v6.3h-1zM750 111.0h1v6.3h-1zM751 111.0h1v6.3h-1zM752 111.0h1v6.3h-1zM753 111.0h1v6.3h-1zM754 111.0h1v6.3h-1zM755 111.0h1v6.3h-1zM756 111.0h1v3.7h-1zM757 108.5h1v6.3h-1zM758 108.5h1v6.3h-1zM759 111.0h1v6.3h-1zM760 111.0h1v6.3h-1zM761 113.7h1v3.7h-1zM762 113.7h1v3.7h-1zM763 111.0h1v6.3h-1zM764 111.0h1v6.3h-1zM765 111.0h1v3.7h-1zM766 113.7h1v3.7h-1zM767 113.7h1v1.1h-1zM768 111.0h1v3.7h-1zM769 113.7h1v3.7h-1zM770 111.0h1v6.3h-1zM771 111.0h1v6.3h-1zM772 111.0h1v6.3h-1zM773 111.0h1v6.3h-1zM774 111.0h1v6.3h-1zM775 111.0h1v6.3h-1zM776 111.0h1v6.3h-1zM777 108.5h1v8.9h-1zM778 111.0h1v3.7h-1zM779 111.0h1v6.3h-1zM780 111.0h1v6.3h-1zM781 111.0h1v3.7h-1zM782 113.7h1v3.7h-1zM783 111.0h1v6.3h-1zM784 111.0h1v3.7h-1zM785 111.0h1v3.7h-1zM786 111.0h1v6.3h-1zM787 111.0h1v3.7h-1zM788 111.0h1v3.7h-1zM789 111.0h1v6.3h-1zM790 111.0h1v6.3h-1zM791 111.0h1v8.9h-1zM792 111.0h1v6.3h-1zM793 113.7h1v3.7h-1zM794 113.7h1v3.7h-1zM795 113.7h1v1.1h-1zM796 113.7h1v3.7h-1zM797 111.0h1v6.3h-1zM798 111.0h1v6.3h-1zM799 111.0h1v3.7h-1zM800 111.0h1v3.7h-1zM801 111.0h1v3.7h-1zM802 113.7h1v3.7h-1zM803 111.0h1v6.3h-1zM804 111.0h1v3.7h-1zM805 111.0h1v3.7h-1zM806 111.0h1v3.7h-1zM807 111.0h1v3.7h-1zM808 111.0h1v6.3h-1zM809 111.0h1v3.7h-1zM810 111.0h1v6.3h-1zM811 113.7h1v1.1h-1zM812 111.0h1v6.3h-1zM813 108.5h1v8.9h-1zM814 111.0h1v6.3h-1zM815 111.0h1v6.3h-1zM816 111.0h1v6.3h-1zM817 111.0h1v3.7h-1zM818 111.0h1v6.3h-1zM819 108.5h1v8.9h-1zM820 108.5h1v8.9h-1zM821 111.0h1v6.3h-1zM822 111.0h1v6.3h-1zM823 111.0h1v6.3h-1zM824 111.0h1v3.7h-1zM825 113.7h1v1.1h-1zM826 113.7h1v3.7h-1zM827 111.0h1v6.3h-1zM828 111.0h1v3.7h-1zM829 111.0h1v6.3h-1zM830 111.0h1v3.7h-1zM831 111.0h1v3.7h-1zM832 111.0h1v6.3h-1zM833 111.0h1v6.3h-1zM834 111.0h1v6.3h-1zM835 113.7h1v3.7h-1zM836 113.7h1v3.7h-1zM837 111.0h1v3.7h-1zM838 111.0h1v3.7h-1zM839 111.0h1v3.7h-1zM840 111.0h1v3.7h-1zM841 113.7h1v3.7h-1zM842 111.0h1v6.3h-1zM843 111.0h1v6.3h-1zM844 111.0h1v6.3h-1zM845 113.7h1v1.1h-1zM846 111.0h1v6.3h-1zM847 111.0h1v6.3h-1zM848 111.0h1v6.3h-1zM849 111.0h1v6.3h-1zM850 111.0h1v6.3h-1zM851 111.0h1v6.3h-1zM852 111.0h1v6.3h-1zM853 113.7h1v1.1h-1zM854 111.0h1v6.3h-1zM855 111.0h1v6.3h-1zM856 108.5h1v8.9h-1zM857 113.7h1v3.7h-1zM858 111.0h1v6.3h-1zM859 111.0h1v6.3h-1zM860 111.0h1v6.3h-1zM861 111.0h1v6.3h-1zM862 111.0h1v6.3h-1zM863 111.0h1v3.7h-1zM864 111.0h1v6.3h-1zM865 113.7h1v3.7h-1zM866 113.7h1v3.7h-1zM867 111.0h1v6.3h-1zM868 111.0h1v3.7h-1zM869 111.0h1v3.7h-1zM870 113.7h1v3.7h-1zM871 111.0h1v3.7h-1zM872 111.0h1v6.3h-1zM873 111.0h1v6.3h-1zM874 111.0h1v6.3h-1zM875 111.0h1v6.3h-1zM876 111.0h1v6.3h-1zM877 111.0h1v3.7h-1zM878 111.0h1v6.3h-1zM879 111.0h1v6.3h-1zM880 113.7h1v3.7h-1zM881 111.0h1v6.3h-1zM882 108.5h1v6.3h-1zM883 111.0h1v6.3h-1zM884 111.0h1v6.3h-1zM885 111.0h1v6.3h-1zM886 113.7h1v3.7h-1zM887 113.7h1v3.7h-1zM888 113.7h1v3.7h-1zM889 111.0h1v3.7h-1zM890 111.0h1v3.7h-1zM891 111.0h1v6.3h-1zM892 113.7h1v3.7h-1zM893 111.0h1v3.7h-1zM894 111.0h1v6.3h-1zM895 111.0h1v3.7h-1zM896 111.0h1v3.7h-1zM897 111.0h1v6.3h-1zM898 111.0h1v6.3h-1zM899 111.0h1v3.7h-1zM900 111.0h1v3.7h-1zM901 108.5h1v6.3h-1zM902 111.0h1v6.3h-1zM903 111.0h1v6.3h-1zM904 111.0h1v3.7h-1zM905 111.0h1v3.7h-1zM906 111.0h1v3.7h-1zM907 111.0h1v6.3h-1zM908 111.0h1v6.3h-1zM909 111.0h1v3.7h-1zM910 111.0h1v6.3h-1zM911 111.0h1v6.3h-1zM912 111.0h1v6.3h-1zM913 113.7h1v1.1h-1zM914 113.7h1v3.7h-1zM915 111.0h1v6.3h-1zM916 113.7h1v3.7h-1zM917 108.5h1v8.9h-1zM918 111.0h1v3.7h-1zM919 113.7h1v3.7h-1zM920 113.7h1v3.7h-1zM921 111.0h1v6.3h-1zM922 111.0h1v6.3h-1zM923 111.0h1v6.3h-1zM924 111.0h1v6.3h-1zM925 111.0h1v6.3h-1zM926 111.0h1v6.3h-1zM927 108.5h1v8.9h-1zM928 111.0h1v3.7h-1zM929 111.0h1v3.7h-1zM930 111.0h1v6.3h-1zM931 111.0h1v6.3h-1zM932 111.0h1v6.3h-1zM933 111.0h1v3.7h-1zM934 111.0h1v3.7h-1zM935 111.0h1v3.7h-1zM936 108.5h1v8.9h-1zM937 111.0h1v6.3h-1zM938 111.0h1v6.3h-1zM939 111.0h1v3.7h-1zM940 111.0h1v6.3h-1zM941 111.0h1v6.3h-1zM942 111.0h1v3.7h-1zM943 111.0h1v6.3h-1zM944 111.0h1v6.3h-1zM945 108.5h1v8.9h-1zM946 111.0h1v6.3h-1zM947 111.0h1v6.3h-1zM948 111.0h1v6.3h-1zM949 111.0h1v6.3h-1zM950 108.5h1v8.9h-1zM951 111.0h1v3.7h-1zM952 111.0h1v3.7h-1zM953 111.0h1v3.7h-1zM954 111.0h1v3.7h-1zM955 111.0h1v6.3h-1zM956 111.0h1v6.3h-1zM957 113.7h1v1.1h-1zM958 108.5h1v6.3h-1zM959 108.5h1v8.9h-1zM960 111.0h1v3.7h-1zM961 113.7h1v3.7h-1zM962 108.5h1v8.9h-1zM963 108.5h1v6.3h-1zM964 108.5h1v6.3h-1zM965 111.0h1v3.7h-1zM966 111.0h1v6.3h-1zM967 111.0h1v6.3h-1zM968 111.0h1v3.7h-1zM969 108.5h1v6.3h-1zM970 111.0h1v6.3h-1zM971 111.0h1v6.3h-1zM972 111.0h1v3.7h-1zM973 111.0h1v6.3h-1zM974 111.0h1v3.7h-1zM975 111.0h1v6.3h-1zM976 111.0h1v6.3h-1zM977 113.7h1v3.7h-1zM978 113.7h1v1.1h-1zM979 111.0h1v6.3h-1zM980 111.0h1v6.3h-1zM981 111.0h1v6.3h-1zM982 108.5h1v6.3h-1zM983 111.0h1v3.7h-1zM984 108.5h1v8.9h-1zM985 111.0h1v6.3h-1zM986 111.0h1v8.9h-1zM987 111.0h1v6.3h-1zM988 111.0h1v3.7h-1zM989 111.0h1v3.7h-1zM990 111.0h1v6.3h-1zM991 111.0h1v6.3h-1zM992 111.0h1v6.3h-1zM993 111.0h1v6.3h-1zM994 111.0h1v6.3h-1zM995 111.0h1v6.3h-1zM996 111.0h1v6.3h-1zM997 111.0h1v6.3h-1zM998 111.0h1v6.3h-1zM999 111.0h1v6.3h-1zM1000 111.0h1v3.7h-1zM1001 111.0h1v3.7h-1zM1002 111.0h1v3.7h-1zM1003 111.0h1v6.3h-1zM1004 111.0h1v8.9h-1zM1005 111.0h1v6.3h-1zM1006 111.0h1v6.3h-1zM1007 111.0h1v6.3h-1zM1008 111.0h1v6.3h-1zM1009 113.7h1v3.7h-1zM1010 111.0h1v3.7h-1zM1011 111.0h1v6.3h-1zM1012 111.0h1v3.7h-1zM1013 111.0h1v3.7h-1zM1014 111.0h1v6.3h-1zM1015 111.0h1v6.3h-1zM1016 111.0h1v3.7h-1zM1017 111.0h1v6.3h-1zM1018 111.0h1v3.7h-1zM1019 111.0h1v3.7h-1zM1020 111.0h1v6.3h-1z" fill="#ffff00" stroke="#ffff00" stroke-width="0.45" shape-rendering="geometricPrecision"/>
  <!-- record-view small T -->
  <g shape-rendering="geometricPrecision">
    <rect x="144" y="5" width="8" height="11" rx="2" fill="#ff9a00"/>
    <path d="M145 6.9h6M148 6.9v8.6" stroke="#000" stroke-width="1.9" fill="none"/>
    <!-- trigger level T marker -->
    <polygon points="21,30.5 27,24 37,24 38,25 38,36 37,37 27,37" fill="#ff9a00"/>
    <path d="M27.3 26.1h9.6M31.9 26.1v9.6" stroke="#000" stroke-width="2.2" fill="none"/>
    <!-- ch1 ground marker -->
    <polygon points="0,104.3 12.8,104.3 19.8,112 12.8,120.4 0,120.4" fill="#ffff00"/>
    <polygon points="0,104.3 12.8,104.3 13.4,105 0,105" fill="#ffffc8"/>
    <polygon points="0,119.6 13.4,119.6 12.8,120.6 0,120.6" fill="#8c8c00"/>
    <!-- ch3 ground marker -->
    <polygon points="0.8,659 12.6,659 19.3,666.6 12.6,674.6 0.8,674.6" fill="#08040a" stroke="#a800a8" stroke-width="1.3"/>
    <!-- right side ch3 trigger level arrow -->
    <polygon points="1010,381.5 1016,376 1016,387" fill="#c000c0"/>
    <rect x="1016" y="381" width="5" height="1.2" fill="#c000c0"/>
  </g>
</svg>

<div class="abs tek">Tek</div>
<div class="abs lbl top" style="left:35.1px; top:-1.3px; letter-spacing:1.35px;">Run</div>
<div class="abs lbl top" style="left:925px; top:-1.3px; letter-spacing:1.45px;">Trig?</div>

<!-- marker digits -->
<div class="abs dig" style="left:1.5px; top:103.5px; width:11px; text-align:center; color:#000; font-family:'Liberation Sans','DejaVu Sans',sans-serif; font-weight:bold; font-size:15.5px; line-height:18px;">1</div>
<div class="abs dig" style="left:2px; top:657.6px; width:11px; text-align:center; color:#b400b4; font-family:'DejaVu Sans Condensed','DejaVu Sans',sans-serif; font-size:15px; line-height:18px; -webkit-text-stroke:0.2px #b400b4;">3</div>

<!-- channel read-outs -->
<div class="box" style="left:20px; top:670px; width:555px; height:21px;"></div>
<div class="pill one" style="left:25.5px; top:673px; background:#ffff00;"><span>1</span></div>
<div class="abs lbl yel" style="left:67.7px; top:671.6px; letter-spacing:1.88px;">500mV Ω</div>
<div class="pill" style="left:304px; top:673px; background:#a800a8;"><span>3</span></div>
<div class="abs lbl dmag" style="left:345.6px; top:671.6px; letter-spacing:1.88px;">500mV Ω</div>

<!-- horizontal read-out -->
<div class="box" style="left:582px; top:670px; width:148px; height:38px;"></div>
<div class="abs lbl" style="left:587.6px; top:671.6px; letter-spacing:1.8px;">200ns</div>
<svg class="abs" style="left:587px; top:691px;" width="36" height="14" viewBox="0 0 36 14">
  <rect x="0.3" y="0.4" width="11.4" height="12.6" rx="1.6" fill="#ff9a00"/>
  <path d="M2.2 2.8h7.6M6 2.8v8.9" stroke="#000" stroke-width="2" fill="none"/>
  <path d="M12.5 6.8h8M17.6 3.6l3.2 3.2l-3.2 3.2" stroke="#ff9a00" stroke-width="1.5" fill="none"/>
  <polygon points="22.8,3.2 34.4,3.2 28.6,9.6" fill="#ff9a00"/>
</svg>
<div class="abs lbl org" style="left:621.5px; top:688.4px; letter-spacing:1.75px;">311.290µs</div>

<!-- acquisition read-out -->
<div class="box" style="left:737px; top:670px; width:107px; height:38px;"></div>
<div class="abs lbl" style="left:743.1px; top:671.6px; letter-spacing:1.61px;">2.50GS/s</div>
<div class="abs lbl" style="left:743.6px; top:688.4px; letter-spacing:1.68px;">1M points</div>

<!-- trigger read-out -->
<div class="box" style="left:851px; top:670px; width:171px; height:38px;"></div>
<div class="pill" style="left:882px; top:673px; background:#a800a8;"><span>3</span></div>
<svg class="abs" style="left:918px; top:673px;" width="18" height="16" viewBox="0 0 18 16">
  <path d="M2 3h4.2l3.6 9h4.2" stroke="#fff" stroke-width="1.7" fill="none" stroke-linejoin="miter"/>
</svg>
<div class="abs lbl" style="left:964.6px; top:671.5px; letter-spacing:1.46px;">2.19 V</div>

<!-- date / time -->
<div class="box" style="left:909px; top:729px; width:113px; height:38px;"></div>
<div class="abs lbl" style="left:916px; top:731.5px; letter-spacing:1.22px;">11 Oct  2022</div>
<div class="abs lbl" style="left:916px; top:747.5px; letter-spacing:1.31px;">09:24:56</div>
</body>
</html>
